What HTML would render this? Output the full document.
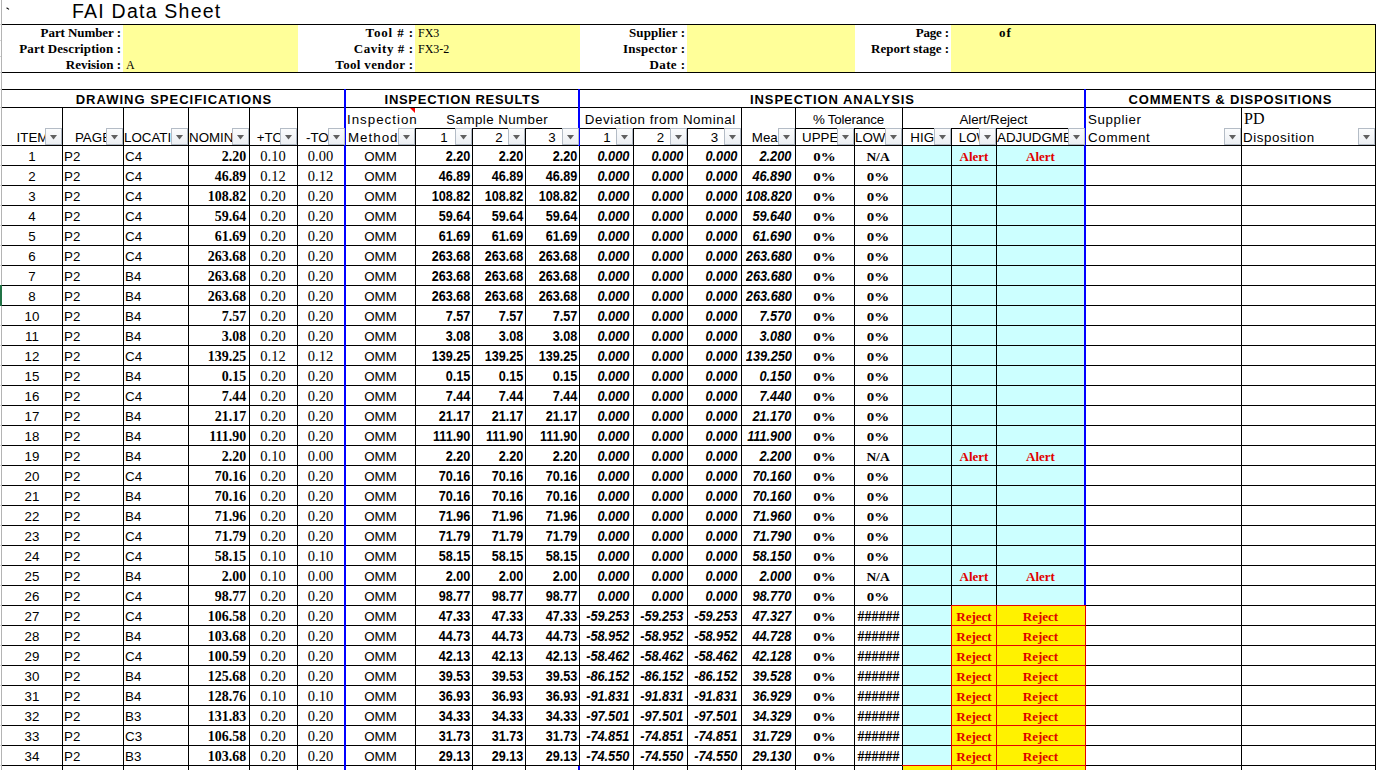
<!DOCTYPE html><html><head><meta charset="utf-8"><style>
*{margin:0;padding:0;box-sizing:border-box}
html,body{width:1378px;height:770px;overflow:hidden;background:#fff;position:relative}
div{position:absolute}
.t{white-space:nowrap;overflow:hidden;color:#000;line-height:normal}
.btn{width:17px;height:17px;border:1px solid #b4bcc6;background:linear-gradient(#fbfcfd,#eceff3)}
.btn svg{position:absolute;left:4px;top:6px}
</style></head><body><div style="left:1px;top:0px;width:1px;height:770px;background:#b4b4b4"></div>
<div style="left:0px;top:24px;width:1px;height:1px;background:#d4d4d4"></div>
<div style="left:0px;top:40px;width:1px;height:1px;background:#d4d4d4"></div>
<div style="left:0px;top:56px;width:1px;height:1px;background:#d4d4d4"></div>
<div style="left:0px;top:72px;width:1px;height:1px;background:#d4d4d4"></div>
<div style="left:0px;top:89px;width:1px;height:1px;background:#d4d4d4"></div>
<div style="left:0px;top:107px;width:1px;height:1px;background:#d4d4d4"></div>
<div style="left:0px;top:145px;width:1px;height:1px;background:#d4d4d4"></div>
<div style="left:0px;top:165px;width:1px;height:1px;background:#d4d4d4"></div>
<div style="left:0px;top:185px;width:1px;height:1px;background:#d4d4d4"></div>
<div style="left:0px;top:205px;width:1px;height:1px;background:#d4d4d4"></div>
<div style="left:0px;top:225px;width:1px;height:1px;background:#d4d4d4"></div>
<div style="left:0px;top:245px;width:1px;height:1px;background:#d4d4d4"></div>
<div style="left:0px;top:265px;width:1px;height:1px;background:#d4d4d4"></div>
<div style="left:0px;top:285px;width:1px;height:1px;background:#d4d4d4"></div>
<div style="left:0px;top:305px;width:1px;height:1px;background:#d4d4d4"></div>
<div style="left:0px;top:325px;width:1px;height:1px;background:#d4d4d4"></div>
<div style="left:0px;top:345px;width:1px;height:1px;background:#d4d4d4"></div>
<div style="left:0px;top:365px;width:1px;height:1px;background:#d4d4d4"></div>
<div style="left:0px;top:385px;width:1px;height:1px;background:#d4d4d4"></div>
<div style="left:0px;top:405px;width:1px;height:1px;background:#d4d4d4"></div>
<div style="left:0px;top:425px;width:1px;height:1px;background:#d4d4d4"></div>
<div style="left:0px;top:445px;width:1px;height:1px;background:#d4d4d4"></div>
<div style="left:0px;top:465px;width:1px;height:1px;background:#d4d4d4"></div>
<div style="left:0px;top:485px;width:1px;height:1px;background:#d4d4d4"></div>
<div style="left:0px;top:505px;width:1px;height:1px;background:#d4d4d4"></div>
<div style="left:0px;top:525px;width:1px;height:1px;background:#d4d4d4"></div>
<div style="left:0px;top:545px;width:1px;height:1px;background:#d4d4d4"></div>
<div style="left:0px;top:565px;width:1px;height:1px;background:#d4d4d4"></div>
<div style="left:0px;top:585px;width:1px;height:1px;background:#d4d4d4"></div>
<div style="left:0px;top:605px;width:1px;height:1px;background:#d4d4d4"></div>
<div style="left:0px;top:625px;width:1px;height:1px;background:#d4d4d4"></div>
<div style="left:0px;top:645px;width:1px;height:1px;background:#d4d4d4"></div>
<div style="left:0px;top:665px;width:1px;height:1px;background:#d4d4d4"></div>
<div style="left:0px;top:685px;width:1px;height:1px;background:#d4d4d4"></div>
<div style="left:0px;top:705px;width:1px;height:1px;background:#d4d4d4"></div>
<div style="left:0px;top:725px;width:1px;height:1px;background:#d4d4d4"></div>
<div style="left:0px;top:745px;width:1px;height:1px;background:#d4d4d4"></div>
<div style="left:0px;top:765px;width:1px;height:1px;background:#d4d4d4"></div>
<div style="left:0px;top:285px;width:2px;height:21px;background:#217346"></div>
<div style="left:6px;top:8px;width:3px;height:2px;border-top:1px solid #000;transform:rotate(35deg)"></div>
<div style="left:123px;top:25px;width:175px;height:47px;background:#ffff99"></div>
<div style="left:415px;top:25px;width:165px;height:47px;background:#ffff99"></div>
<div style="left:687px;top:25px;width:168px;height:47px;background:#ffff99"></div>
<div style="left:951px;top:25px;width:424px;height:47px;background:#ffff99"></div>
<div style="left:2px;top:24px;width:1374px;height:1px;background:#000"></div>
<div style="left:2px;top:72px;width:1374px;height:1px;background:#000"></div>
<div style="left:1375px;top:24px;width:1px;height:746px;background:#000"></div>
<div style="left:2px;top:89px;width:1374px;height:1px;background:#000"></div>
<div style="left:2px;top:107px;width:1374px;height:1px;background:#000"></div>
<div style="left:415px;top:128px;width:326px;height:1px;background:#000"></div>
<div style="left:795px;top:128px;width:290px;height:1px;background:#000"></div>
<div style="left:2px;top:145px;width:1374px;height:1px;background:#000"></div>
<div style="left:62px;top:107px;width:1px;height:38px;background:#000"></div>
<div style="left:123px;top:107px;width:1px;height:38px;background:#000"></div>
<div style="left:188px;top:107px;width:1px;height:38px;background:#000"></div>
<div style="left:249px;top:107px;width:1px;height:38px;background:#000"></div>
<div style="left:297px;top:107px;width:1px;height:38px;background:#000"></div>
<div style="left:741px;top:107px;width:1px;height:38px;background:#000"></div>
<div style="left:795px;top:107px;width:1px;height:38px;background:#000"></div>
<div style="left:902px;top:107px;width:1px;height:38px;background:#000"></div>
<div style="left:1241px;top:107px;width:1px;height:38px;background:#000"></div>
<div style="left:415px;top:128px;width:1px;height:17px;background:#000"></div>
<div style="left:472px;top:128px;width:1px;height:17px;background:#000"></div>
<div style="left:525px;top:128px;width:1px;height:17px;background:#000"></div>
<div style="left:633px;top:128px;width:1px;height:17px;background:#000"></div>
<div style="left:687px;top:128px;width:1px;height:17px;background:#000"></div>
<div style="left:854px;top:128px;width:1px;height:17px;background:#000"></div>
<div style="left:951px;top:128px;width:1px;height:17px;background:#000"></div>
<div style="left:996px;top:128px;width:1px;height:17px;background:#000"></div>
<div style="left:903px;top:146px;width:181px;height:624px;background:#ccffff"></div>
<div style="left:2px;top:145px;width:1374px;height:1px;background:#000"></div>
<div style="left:2px;top:165px;width:1374px;height:1px;background:#000"></div>
<div style="left:2px;top:185px;width:1374px;height:1px;background:#000"></div>
<div style="left:2px;top:205px;width:1374px;height:1px;background:#000"></div>
<div style="left:2px;top:225px;width:1374px;height:1px;background:#000"></div>
<div style="left:2px;top:245px;width:1374px;height:1px;background:#000"></div>
<div style="left:2px;top:265px;width:1374px;height:1px;background:#000"></div>
<div style="left:2px;top:285px;width:1374px;height:1px;background:#000"></div>
<div style="left:2px;top:305px;width:1374px;height:1px;background:#000"></div>
<div style="left:2px;top:325px;width:1374px;height:1px;background:#000"></div>
<div style="left:2px;top:345px;width:1374px;height:1px;background:#000"></div>
<div style="left:2px;top:365px;width:1374px;height:1px;background:#000"></div>
<div style="left:2px;top:385px;width:1374px;height:1px;background:#000"></div>
<div style="left:2px;top:405px;width:1374px;height:1px;background:#000"></div>
<div style="left:2px;top:425px;width:1374px;height:1px;background:#000"></div>
<div style="left:2px;top:445px;width:1374px;height:1px;background:#000"></div>
<div style="left:2px;top:465px;width:1374px;height:1px;background:#000"></div>
<div style="left:2px;top:485px;width:1374px;height:1px;background:#000"></div>
<div style="left:2px;top:505px;width:1374px;height:1px;background:#000"></div>
<div style="left:2px;top:525px;width:1374px;height:1px;background:#000"></div>
<div style="left:2px;top:545px;width:1374px;height:1px;background:#000"></div>
<div style="left:2px;top:565px;width:1374px;height:1px;background:#000"></div>
<div style="left:2px;top:585px;width:1374px;height:1px;background:#000"></div>
<div style="left:2px;top:605px;width:1374px;height:1px;background:#000"></div>
<div style="left:2px;top:625px;width:1374px;height:1px;background:#000"></div>
<div style="left:2px;top:645px;width:1374px;height:1px;background:#000"></div>
<div style="left:2px;top:665px;width:1374px;height:1px;background:#000"></div>
<div style="left:2px;top:685px;width:1374px;height:1px;background:#000"></div>
<div style="left:2px;top:705px;width:1374px;height:1px;background:#000"></div>
<div style="left:2px;top:725px;width:1374px;height:1px;background:#000"></div>
<div style="left:2px;top:745px;width:1374px;height:1px;background:#000"></div>
<div style="left:2px;top:765px;width:1374px;height:1px;background:#000"></div>
<div style="left:62px;top:146px;width:1px;height:624px;background:#000"></div>
<div style="left:123px;top:146px;width:1px;height:624px;background:#000"></div>
<div style="left:188px;top:146px;width:1px;height:624px;background:#000"></div>
<div style="left:249px;top:146px;width:1px;height:624px;background:#000"></div>
<div style="left:297px;top:146px;width:1px;height:624px;background:#000"></div>
<div style="left:415px;top:146px;width:1px;height:624px;background:#000"></div>
<div style="left:472px;top:146px;width:1px;height:624px;background:#000"></div>
<div style="left:525px;top:146px;width:1px;height:624px;background:#000"></div>
<div style="left:579px;top:146px;width:1px;height:624px;background:#000"></div>
<div style="left:633px;top:146px;width:1px;height:624px;background:#000"></div>
<div style="left:687px;top:146px;width:1px;height:624px;background:#000"></div>
<div style="left:741px;top:146px;width:1px;height:624px;background:#000"></div>
<div style="left:795px;top:146px;width:1px;height:624px;background:#000"></div>
<div style="left:854px;top:146px;width:1px;height:624px;background:#000"></div>
<div style="left:902px;top:146px;width:1px;height:624px;background:#000"></div>
<div style="left:951px;top:146px;width:1px;height:624px;background:#000"></div>
<div style="left:996px;top:146px;width:1px;height:624px;background:#000"></div>
<div style="left:1241px;top:146px;width:1px;height:624px;background:#000"></div>
<div style="left:344px;top:89px;width:2px;height:681px;background:#0000ff"></div>
<div style="left:578px;top:89px;width:2px;height:57px;background:#0000ff"></div>
<div style="left:578px;top:766px;width:2px;height:4px;background:#0000ff"></div>
<div style="left:1084px;top:89px;width:2px;height:681px;background:#0000ff"></div>
<div style="left:951px;top:605px;width:135px;height:21px;background:#fff200"></div>
<div style="left:951px;top:605px;width:135px;height:1px;background:#e60000"></div>
<div style="left:951px;top:625px;width:135px;height:1px;background:#e60000"></div>
<div style="left:951px;top:605px;width:1px;height:21px;background:#e60000"></div>
<div style="left:996px;top:605px;width:1px;height:21px;background:#e60000"></div>
<div style="left:1085px;top:605px;width:1px;height:21px;background:#e60000"></div>
<div style="left:951px;top:625px;width:135px;height:21px;background:#fff200"></div>
<div style="left:951px;top:625px;width:135px;height:1px;background:#e60000"></div>
<div style="left:951px;top:645px;width:135px;height:1px;background:#e60000"></div>
<div style="left:951px;top:625px;width:1px;height:21px;background:#e60000"></div>
<div style="left:996px;top:625px;width:1px;height:21px;background:#e60000"></div>
<div style="left:1085px;top:625px;width:1px;height:21px;background:#e60000"></div>
<div style="left:951px;top:645px;width:135px;height:21px;background:#fff200"></div>
<div style="left:951px;top:645px;width:135px;height:1px;background:#e60000"></div>
<div style="left:951px;top:665px;width:135px;height:1px;background:#e60000"></div>
<div style="left:951px;top:645px;width:1px;height:21px;background:#e60000"></div>
<div style="left:996px;top:645px;width:1px;height:21px;background:#e60000"></div>
<div style="left:1085px;top:645px;width:1px;height:21px;background:#e60000"></div>
<div style="left:951px;top:665px;width:135px;height:21px;background:#fff200"></div>
<div style="left:951px;top:665px;width:135px;height:1px;background:#e60000"></div>
<div style="left:951px;top:685px;width:135px;height:1px;background:#e60000"></div>
<div style="left:951px;top:665px;width:1px;height:21px;background:#e60000"></div>
<div style="left:996px;top:665px;width:1px;height:21px;background:#e60000"></div>
<div style="left:1085px;top:665px;width:1px;height:21px;background:#e60000"></div>
<div style="left:951px;top:685px;width:135px;height:21px;background:#fff200"></div>
<div style="left:951px;top:685px;width:135px;height:1px;background:#e60000"></div>
<div style="left:951px;top:705px;width:135px;height:1px;background:#e60000"></div>
<div style="left:951px;top:685px;width:1px;height:21px;background:#e60000"></div>
<div style="left:996px;top:685px;width:1px;height:21px;background:#e60000"></div>
<div style="left:1085px;top:685px;width:1px;height:21px;background:#e60000"></div>
<div style="left:951px;top:705px;width:135px;height:21px;background:#fff200"></div>
<div style="left:951px;top:705px;width:135px;height:1px;background:#e60000"></div>
<div style="left:951px;top:725px;width:135px;height:1px;background:#e60000"></div>
<div style="left:951px;top:705px;width:1px;height:21px;background:#e60000"></div>
<div style="left:996px;top:705px;width:1px;height:21px;background:#e60000"></div>
<div style="left:1085px;top:705px;width:1px;height:21px;background:#e60000"></div>
<div style="left:951px;top:725px;width:135px;height:21px;background:#fff200"></div>
<div style="left:951px;top:725px;width:135px;height:1px;background:#e60000"></div>
<div style="left:951px;top:745px;width:135px;height:1px;background:#e60000"></div>
<div style="left:951px;top:725px;width:1px;height:21px;background:#e60000"></div>
<div style="left:996px;top:725px;width:1px;height:21px;background:#e60000"></div>
<div style="left:1085px;top:725px;width:1px;height:21px;background:#e60000"></div>
<div style="left:951px;top:745px;width:135px;height:21px;background:#fff200"></div>
<div style="left:951px;top:745px;width:135px;height:1px;background:#e60000"></div>
<div style="left:951px;top:765px;width:135px;height:1px;background:#e60000"></div>
<div style="left:951px;top:745px;width:1px;height:21px;background:#e60000"></div>
<div style="left:996px;top:745px;width:1px;height:21px;background:#e60000"></div>
<div style="left:1085px;top:745px;width:1px;height:21px;background:#e60000"></div>
<div style="left:902px;top:765px;width:184px;height:5px;background:#fff200"></div>
<div style="left:902px;top:765px;width:184px;height:1px;background:#e60000"></div>
<div style="left:902px;top:766px;width:1px;height:4px;background:#000"></div>
<div style="left:951px;top:765px;width:1px;height:5px;background:#e60000"></div>
<div style="left:996px;top:765px;width:1px;height:5px;background:#e60000"></div>
<div style="left:1085px;top:765px;width:1px;height:5px;background:#e60000"></div>
<div class="t" style="left:72px;top:0px;width:328px;text-align:left;padding-left:0px;font-family:'Liberation Sans',sans-serif;font-size:19.5px;letter-spacing:1.23px;">FAI Data Sheet</div>
<div class="t" style="left:2px;top:25px;width:121px;text-align:right;padding-right:2px;font-family:'Liberation Serif',serif;font-size:13px;font-weight:bold;letter-spacing:-0.08px;padding-right:2.08px;">Part Number :</div>
<div class="t" style="left:2px;top:41px;width:121px;text-align:right;padding-right:2px;font-family:'Liberation Serif',serif;font-size:13px;font-weight:bold;letter-spacing:0.12px;padding-right:1.88px;">Part Description :</div>
<div class="t" style="left:2px;top:57px;width:121px;text-align:right;padding-right:2px;font-family:'Liberation Serif',serif;font-size:13px;font-weight:bold;letter-spacing:0.00px;padding-right:2.00px;">Revision :</div>
<div class="t" style="left:297px;top:25px;width:118px;text-align:right;padding-right:2px;font-family:'Liberation Serif',serif;font-size:13px;font-weight:bold;letter-spacing:0.86px;padding-right:1.14px;">Tool # :</div>
<div class="t" style="left:297px;top:41px;width:118px;text-align:right;padding-right:2px;font-family:'Liberation Serif',serif;font-size:13px;font-weight:bold;letter-spacing:0.56px;padding-right:1.44px;">Cavity # :</div>
<div class="t" style="left:297px;top:57px;width:118px;text-align:right;padding-right:2px;font-family:'Liberation Serif',serif;font-size:13px;font-weight:bold;letter-spacing:0.33px;padding-right:1.67px;">Tool vendor :</div>
<div class="t" style="left:579px;top:25px;width:108px;text-align:right;padding-right:2px;font-family:'Liberation Serif',serif;font-size:13px;font-weight:bold;letter-spacing:0.11px;padding-right:1.89px;">Supplier :</div>
<div class="t" style="left:579px;top:41px;width:108px;text-align:right;padding-right:2px;font-family:'Liberation Serif',serif;font-size:13px;font-weight:bold;letter-spacing:0.20px;padding-right:1.80px;">Inspector :</div>
<div class="t" style="left:579px;top:57px;width:108px;text-align:right;padding-right:2px;font-family:'Liberation Serif',serif;font-size:13px;font-weight:bold;letter-spacing:0.40px;padding-right:1.60px;">Date :</div>
<div class="t" style="left:854px;top:25px;width:97px;text-align:right;padding-right:2px;font-family:'Liberation Serif',serif;font-size:13px;font-weight:bold;letter-spacing:-0.20px;padding-right:2.20px;">Page :</div>
<div class="t" style="left:854px;top:41px;width:97px;text-align:right;padding-right:2px;font-family:'Liberation Serif',serif;font-size:13px;font-weight:bold;letter-spacing:0.00px;padding-right:2.00px;">Report stage :</div>
<div class="t" style="left:123px;top:58px;width:174px;text-align:left;padding-left:3px;font-family:'Liberation Serif',serif;font-size:12px;">A</div>
<div class="t" style="left:415px;top:26px;width:164px;text-align:left;padding-left:3px;font-family:'Liberation Serif',serif;font-size:12px;">FX3</div>
<div class="t" style="left:415px;top:42px;width:164px;text-align:left;padding-left:3px;font-family:'Liberation Serif',serif;font-size:12px;">FX3-2</div>
<div class="t" style="left:997px;top:25px;width:103px;text-align:left;padding-left:2px;font-family:'Liberation Serif',serif;font-size:13px;font-weight:bold;letter-spacing:1.00px;">of</div>
<div class="t" style="left:2px;top:92px;width:343px;text-align:center;font-family:'Liberation Sans',sans-serif;font-size:13px;font-weight:bold;letter-spacing:1.00px;text-indent:1.00px;">DRAWING SPECIFICATIONS</div>
<div class="t" style="left:345px;top:92px;width:234px;text-align:center;font-family:'Liberation Sans',sans-serif;font-size:13px;font-weight:bold;letter-spacing:0.71px;text-indent:0.71px;">INSPECTION RESULTS</div>
<div class="t" style="left:579px;top:92px;width:506px;text-align:center;font-family:'Liberation Sans',sans-serif;font-size:13px;font-weight:bold;letter-spacing:0.94px;text-indent:0.94px;">INSPECTION ANALYSIS</div>
<div class="t" style="left:1085px;top:92px;width:290px;text-align:center;font-family:'Liberation Sans',sans-serif;font-size:13px;font-weight:bold;letter-spacing:0.82px;text-indent:0.82px;">COMMENTS &amp; DISPOSITIONS</div>
<div class="t" style="left:345px;top:112px;width:155px;text-align:left;padding-left:2px;font-family:'Liberation Sans',sans-serif;font-size:13.33px;letter-spacing:1.00px;">Inspection</div>
<div class="t" style="left:415px;top:112px;width:164px;text-align:center;font-family:'Liberation Sans',sans-serif;font-size:13.33px;letter-spacing:0.42px;text-indent:0.42px;">Sample Number</div>
<div class="t" style="left:579px;top:112px;width:162px;text-align:center;font-family:'Liberation Sans',sans-serif;font-size:13.33px;letter-spacing:0.57px;text-indent:0.57px;">Deviation from Nominal</div>
<div class="t" style="left:795px;top:112px;width:107px;text-align:center;font-family:'Liberation Sans',sans-serif;font-size:13.33px;letter-spacing:-0.20px;text-indent:-0.20px;">% Tolerance</div>
<div class="t" style="left:902px;top:112px;width:183px;text-align:center;font-family:'Liberation Sans',sans-serif;font-size:13.33px;letter-spacing:-0.09px;text-indent:-0.09px;">Alert/Reject</div>
<div class="t" style="left:1085px;top:112px;width:156px;text-align:left;padding-left:3px;font-family:'Liberation Sans',sans-serif;font-size:13.33px;letter-spacing:0.57px;">Supplier</div>
<div class="t" style="left:1241px;top:110px;width:134px;text-align:left;padding-left:3px;font-family:'Liberation Serif',serif;font-size:16px;">PD</div>
<div class="t" style="left:3px;top:130px;width:59px;text-align:center;font-family:'Liberation Sans',sans-serif;font-size:13.33px;">ITEM</div>
<div class="t" style="left:63px;top:130px;width:60px;text-align:center;font-family:'Liberation Sans',sans-serif;font-size:13.33px;">PAGE</div>
<div class="t" style="left:124px;top:130px;width:64px;text-align:center;font-family:'Liberation Sans',sans-serif;font-size:13.33px;">LOCATION</div>
<div class="t" style="left:189px;top:130px;width:60px;text-align:center;font-family:'Liberation Sans',sans-serif;font-size:13.33px;">NOMINAL</div>
<div class="t" style="left:250px;top:130px;width:47px;text-align:center;font-family:'Liberation Sans',sans-serif;font-size:13.33px;">+TOL</div>
<div class="t" style="left:298px;top:130px;width:46px;text-align:center;font-family:'Liberation Sans',sans-serif;font-size:13.33px;">-TOL</div>
<div class="t" style="left:347px;top:130px;width:68px;text-align:left;padding-left:1px;font-family:'Liberation Sans',sans-serif;font-size:13.33px;letter-spacing:1.00px;">Method</div>
<div class="t" style="left:416px;top:130px;width:56px;text-align:center;font-family:'Liberation Sans',sans-serif;font-size:13.33px;">1</div>
<div class="t" style="left:473px;top:130px;width:52px;text-align:center;font-family:'Liberation Sans',sans-serif;font-size:13.33px;">2</div>
<div class="t" style="left:526px;top:130px;width:52px;text-align:center;font-family:'Liberation Sans',sans-serif;font-size:13.33px;">3</div>
<div class="t" style="left:581px;top:130px;width:52px;text-align:center;font-family:'Liberation Sans',sans-serif;font-size:13.33px;">1</div>
<div class="t" style="left:634px;top:130px;width:53px;text-align:center;font-family:'Liberation Sans',sans-serif;font-size:13.33px;">2</div>
<div class="t" style="left:688px;top:130px;width:53px;text-align:center;font-family:'Liberation Sans',sans-serif;font-size:13.33px;">3</div>
<div class="t" style="left:742px;top:130px;width:53px;text-align:center;font-family:'Liberation Sans',sans-serif;font-size:13.33px;">Mean</div>
<div class="t" style="left:796px;top:130px;width:58px;text-align:center;font-family:'Liberation Sans',sans-serif;font-size:13.33px;">UPPER</div>
<div class="t" style="left:855px;top:130px;width:47px;text-align:center;font-family:'Liberation Sans',sans-serif;font-size:13.33px;">LOWER</div>
<div class="t" style="left:903px;top:130px;width:48px;text-align:center;font-family:'Liberation Sans',sans-serif;font-size:13.33px;">HIGH</div>
<div class="t" style="left:952px;top:130px;width:44px;text-align:center;font-family:'Liberation Sans',sans-serif;font-size:13.33px;">LOW</div>
<div class="t" style="left:997px;top:130px;width:87px;text-align:center;font-family:'Liberation Sans',sans-serif;font-size:13.33px;">ADJUDGMENT</div>
<div class="t" style="left:1087px;top:130px;width:154px;text-align:left;padding-left:1px;font-family:'Liberation Sans',sans-serif;font-size:13.33px;letter-spacing:0.67px;">Comment</div>
<div class="t" style="left:1242px;top:130px;width:133px;text-align:left;padding-left:1px;font-family:'Liberation Sans',sans-serif;font-size:13.33px;letter-spacing:0.60px;">Disposition</div>
<div class="t" style="left:2px;top:149px;width:60px;text-align:center;font-family:'Liberation Sans',sans-serif;font-size:13.33px;">1</div>
<div class="t" style="left:62px;top:149px;width:61px;text-align:left;padding-left:2px;font-family:'Liberation Sans',sans-serif;font-size:13.33px;">P2</div>
<div class="t" style="left:123px;top:149px;width:65px;text-align:left;padding-left:2px;font-family:'Liberation Sans',sans-serif;font-size:13.33px;">C4</div>
<div class="t" style="left:188px;top:148px;width:61px;text-align:right;padding-right:3px;font-family:'Liberation Serif',serif;font-size:15px;font-weight:bold;transform:scaleX(0.93);transform-origin:right center;">2.20</div>
<div class="t" style="left:249px;top:148px;width:48px;text-align:center;font-family:'Liberation Serif',serif;font-size:14.5px;">0.10</div>
<div class="t" style="left:297px;top:148px;width:47px;text-align:center;font-family:'Liberation Serif',serif;font-size:14.5px;">0.00</div>
<div class="t" style="left:346px;top:149px;width:69px;text-align:center;font-family:'Liberation Sans',sans-serif;font-size:13.33px;">OMM</div>
<div class="t" style="left:416px;top:148px;width:56px;text-align:right;padding-right:2px;font-family:'Liberation Sans',sans-serif;font-size:14px;font-weight:bold;transform:scaleX(0.9);transform-origin:right center;">2.20</div>
<div class="t" style="left:473px;top:148px;width:52px;text-align:right;padding-right:2px;font-family:'Liberation Sans',sans-serif;font-size:14px;font-weight:bold;transform:scaleX(0.9);transform-origin:right center;">2.20</div>
<div class="t" style="left:526px;top:148px;width:53px;text-align:right;padding-right:2px;font-family:'Liberation Sans',sans-serif;font-size:14px;font-weight:bold;transform:scaleX(0.9);transform-origin:right center;">2.20</div>
<div class="t" style="left:580px;top:148px;width:53px;text-align:right;padding-right:4px;font-family:'Liberation Sans',sans-serif;font-size:14px;font-weight:bold;font-style:italic;transform:scaleX(0.91);transform-origin:right center;">0.000</div>
<div class="t" style="left:634px;top:148px;width:53px;text-align:right;padding-right:4px;font-family:'Liberation Sans',sans-serif;font-size:14px;font-weight:bold;font-style:italic;transform:scaleX(0.91);transform-origin:right center;">0.000</div>
<div class="t" style="left:688px;top:148px;width:53px;text-align:right;padding-right:4px;font-family:'Liberation Sans',sans-serif;font-size:14px;font-weight:bold;font-style:italic;transform:scaleX(0.91);transform-origin:right center;">0.000</div>
<div class="t" style="left:741px;top:148px;width:54px;text-align:right;padding-right:4px;font-family:'Liberation Sans',sans-serif;font-size:14px;font-weight:bold;font-style:italic;transform:scaleX(0.91);transform-origin:right center;">2.200</div>
<div class="t" style="left:795px;top:149px;width:59px;text-align:center;font-family:'Liberation Serif',serif;font-size:13px;font-weight:bold;transform:scaleX(1.15);transform-origin:center center;">0%</div>
<div class="t" style="left:854px;top:149px;width:48px;text-align:center;font-family:'Liberation Serif',serif;font-size:13.5px;font-weight:bold;">N/A</div>
<div class="t" style="left:952px;top:149px;width:44px;text-align:center;font-family:'Liberation Serif',serif;font-size:13px;font-weight:bold;color:#e00000;">Alert</div>
<div class="t" style="left:997px;top:149px;width:87px;text-align:center;font-family:'Liberation Serif',serif;font-size:13px;font-weight:bold;color:#e00000;">Alert</div>
<div class="t" style="left:2px;top:169px;width:60px;text-align:center;font-family:'Liberation Sans',sans-serif;font-size:13.33px;">2</div>
<div class="t" style="left:62px;top:169px;width:61px;text-align:left;padding-left:2px;font-family:'Liberation Sans',sans-serif;font-size:13.33px;">P2</div>
<div class="t" style="left:123px;top:169px;width:65px;text-align:left;padding-left:2px;font-family:'Liberation Sans',sans-serif;font-size:13.33px;">C4</div>
<div class="t" style="left:188px;top:168px;width:61px;text-align:right;padding-right:3px;font-family:'Liberation Serif',serif;font-size:15px;font-weight:bold;transform:scaleX(0.93);transform-origin:right center;">46.89</div>
<div class="t" style="left:249px;top:168px;width:48px;text-align:center;font-family:'Liberation Serif',serif;font-size:14.5px;">0.12</div>
<div class="t" style="left:297px;top:168px;width:47px;text-align:center;font-family:'Liberation Serif',serif;font-size:14.5px;">0.12</div>
<div class="t" style="left:346px;top:169px;width:69px;text-align:center;font-family:'Liberation Sans',sans-serif;font-size:13.33px;">OMM</div>
<div class="t" style="left:416px;top:168px;width:56px;text-align:right;padding-right:2px;font-family:'Liberation Sans',sans-serif;font-size:14px;font-weight:bold;transform:scaleX(0.9);transform-origin:right center;">46.89</div>
<div class="t" style="left:473px;top:168px;width:52px;text-align:right;padding-right:2px;font-family:'Liberation Sans',sans-serif;font-size:14px;font-weight:bold;transform:scaleX(0.9);transform-origin:right center;">46.89</div>
<div class="t" style="left:526px;top:168px;width:53px;text-align:right;padding-right:2px;font-family:'Liberation Sans',sans-serif;font-size:14px;font-weight:bold;transform:scaleX(0.9);transform-origin:right center;">46.89</div>
<div class="t" style="left:580px;top:168px;width:53px;text-align:right;padding-right:4px;font-family:'Liberation Sans',sans-serif;font-size:14px;font-weight:bold;font-style:italic;transform:scaleX(0.91);transform-origin:right center;">0.000</div>
<div class="t" style="left:634px;top:168px;width:53px;text-align:right;padding-right:4px;font-family:'Liberation Sans',sans-serif;font-size:14px;font-weight:bold;font-style:italic;transform:scaleX(0.91);transform-origin:right center;">0.000</div>
<div class="t" style="left:688px;top:168px;width:53px;text-align:right;padding-right:4px;font-family:'Liberation Sans',sans-serif;font-size:14px;font-weight:bold;font-style:italic;transform:scaleX(0.91);transform-origin:right center;">0.000</div>
<div class="t" style="left:741px;top:168px;width:54px;text-align:right;padding-right:4px;font-family:'Liberation Sans',sans-serif;font-size:14px;font-weight:bold;font-style:italic;transform:scaleX(0.91);transform-origin:right center;">46.890</div>
<div class="t" style="left:795px;top:169px;width:59px;text-align:center;font-family:'Liberation Serif',serif;font-size:13px;font-weight:bold;transform:scaleX(1.15);transform-origin:center center;">0%</div>
<div class="t" style="left:854px;top:169px;width:48px;text-align:center;font-family:'Liberation Serif',serif;font-size:13px;font-weight:bold;transform:scaleX(1.15);transform-origin:center center;">0%</div>
<div class="t" style="left:2px;top:189px;width:60px;text-align:center;font-family:'Liberation Sans',sans-serif;font-size:13.33px;">3</div>
<div class="t" style="left:62px;top:189px;width:61px;text-align:left;padding-left:2px;font-family:'Liberation Sans',sans-serif;font-size:13.33px;">P2</div>
<div class="t" style="left:123px;top:189px;width:65px;text-align:left;padding-left:2px;font-family:'Liberation Sans',sans-serif;font-size:13.33px;">C4</div>
<div class="t" style="left:188px;top:188px;width:61px;text-align:right;padding-right:3px;font-family:'Liberation Serif',serif;font-size:15px;font-weight:bold;transform:scaleX(0.93);transform-origin:right center;">108.82</div>
<div class="t" style="left:249px;top:188px;width:48px;text-align:center;font-family:'Liberation Serif',serif;font-size:14.5px;">0.20</div>
<div class="t" style="left:297px;top:188px;width:47px;text-align:center;font-family:'Liberation Serif',serif;font-size:14.5px;">0.20</div>
<div class="t" style="left:346px;top:189px;width:69px;text-align:center;font-family:'Liberation Sans',sans-serif;font-size:13.33px;">OMM</div>
<div class="t" style="left:416px;top:188px;width:56px;text-align:right;padding-right:2px;font-family:'Liberation Sans',sans-serif;font-size:14px;font-weight:bold;transform:scaleX(0.9);transform-origin:right center;">108.82</div>
<div class="t" style="left:473px;top:188px;width:52px;text-align:right;padding-right:2px;font-family:'Liberation Sans',sans-serif;font-size:14px;font-weight:bold;transform:scaleX(0.9);transform-origin:right center;">108.82</div>
<div class="t" style="left:526px;top:188px;width:53px;text-align:right;padding-right:2px;font-family:'Liberation Sans',sans-serif;font-size:14px;font-weight:bold;transform:scaleX(0.9);transform-origin:right center;">108.82</div>
<div class="t" style="left:580px;top:188px;width:53px;text-align:right;padding-right:4px;font-family:'Liberation Sans',sans-serif;font-size:14px;font-weight:bold;font-style:italic;transform:scaleX(0.91);transform-origin:right center;">0.000</div>
<div class="t" style="left:634px;top:188px;width:53px;text-align:right;padding-right:4px;font-family:'Liberation Sans',sans-serif;font-size:14px;font-weight:bold;font-style:italic;transform:scaleX(0.91);transform-origin:right center;">0.000</div>
<div class="t" style="left:688px;top:188px;width:53px;text-align:right;padding-right:4px;font-family:'Liberation Sans',sans-serif;font-size:14px;font-weight:bold;font-style:italic;transform:scaleX(0.91);transform-origin:right center;">0.000</div>
<div class="t" style="left:741px;top:188px;width:54px;text-align:right;padding-right:4px;font-family:'Liberation Sans',sans-serif;font-size:14px;font-weight:bold;font-style:italic;transform:scaleX(0.91);transform-origin:right center;">108.820</div>
<div class="t" style="left:795px;top:189px;width:59px;text-align:center;font-family:'Liberation Serif',serif;font-size:13px;font-weight:bold;transform:scaleX(1.15);transform-origin:center center;">0%</div>
<div class="t" style="left:854px;top:189px;width:48px;text-align:center;font-family:'Liberation Serif',serif;font-size:13px;font-weight:bold;transform:scaleX(1.15);transform-origin:center center;">0%</div>
<div class="t" style="left:2px;top:209px;width:60px;text-align:center;font-family:'Liberation Sans',sans-serif;font-size:13.33px;">4</div>
<div class="t" style="left:62px;top:209px;width:61px;text-align:left;padding-left:2px;font-family:'Liberation Sans',sans-serif;font-size:13.33px;">P2</div>
<div class="t" style="left:123px;top:209px;width:65px;text-align:left;padding-left:2px;font-family:'Liberation Sans',sans-serif;font-size:13.33px;">C4</div>
<div class="t" style="left:188px;top:208px;width:61px;text-align:right;padding-right:3px;font-family:'Liberation Serif',serif;font-size:15px;font-weight:bold;transform:scaleX(0.93);transform-origin:right center;">59.64</div>
<div class="t" style="left:249px;top:208px;width:48px;text-align:center;font-family:'Liberation Serif',serif;font-size:14.5px;">0.20</div>
<div class="t" style="left:297px;top:208px;width:47px;text-align:center;font-family:'Liberation Serif',serif;font-size:14.5px;">0.20</div>
<div class="t" style="left:346px;top:209px;width:69px;text-align:center;font-family:'Liberation Sans',sans-serif;font-size:13.33px;">OMM</div>
<div class="t" style="left:416px;top:208px;width:56px;text-align:right;padding-right:2px;font-family:'Liberation Sans',sans-serif;font-size:14px;font-weight:bold;transform:scaleX(0.9);transform-origin:right center;">59.64</div>
<div class="t" style="left:473px;top:208px;width:52px;text-align:right;padding-right:2px;font-family:'Liberation Sans',sans-serif;font-size:14px;font-weight:bold;transform:scaleX(0.9);transform-origin:right center;">59.64</div>
<div class="t" style="left:526px;top:208px;width:53px;text-align:right;padding-right:2px;font-family:'Liberation Sans',sans-serif;font-size:14px;font-weight:bold;transform:scaleX(0.9);transform-origin:right center;">59.64</div>
<div class="t" style="left:580px;top:208px;width:53px;text-align:right;padding-right:4px;font-family:'Liberation Sans',sans-serif;font-size:14px;font-weight:bold;font-style:italic;transform:scaleX(0.91);transform-origin:right center;">0.000</div>
<div class="t" style="left:634px;top:208px;width:53px;text-align:right;padding-right:4px;font-family:'Liberation Sans',sans-serif;font-size:14px;font-weight:bold;font-style:italic;transform:scaleX(0.91);transform-origin:right center;">0.000</div>
<div class="t" style="left:688px;top:208px;width:53px;text-align:right;padding-right:4px;font-family:'Liberation Sans',sans-serif;font-size:14px;font-weight:bold;font-style:italic;transform:scaleX(0.91);transform-origin:right center;">0.000</div>
<div class="t" style="left:741px;top:208px;width:54px;text-align:right;padding-right:4px;font-family:'Liberation Sans',sans-serif;font-size:14px;font-weight:bold;font-style:italic;transform:scaleX(0.91);transform-origin:right center;">59.640</div>
<div class="t" style="left:795px;top:209px;width:59px;text-align:center;font-family:'Liberation Serif',serif;font-size:13px;font-weight:bold;transform:scaleX(1.15);transform-origin:center center;">0%</div>
<div class="t" style="left:854px;top:209px;width:48px;text-align:center;font-family:'Liberation Serif',serif;font-size:13px;font-weight:bold;transform:scaleX(1.15);transform-origin:center center;">0%</div>
<div class="t" style="left:2px;top:229px;width:60px;text-align:center;font-family:'Liberation Sans',sans-serif;font-size:13.33px;">5</div>
<div class="t" style="left:62px;top:229px;width:61px;text-align:left;padding-left:2px;font-family:'Liberation Sans',sans-serif;font-size:13.33px;">P2</div>
<div class="t" style="left:123px;top:229px;width:65px;text-align:left;padding-left:2px;font-family:'Liberation Sans',sans-serif;font-size:13.33px;">C4</div>
<div class="t" style="left:188px;top:228px;width:61px;text-align:right;padding-right:3px;font-family:'Liberation Serif',serif;font-size:15px;font-weight:bold;transform:scaleX(0.93);transform-origin:right center;">61.69</div>
<div class="t" style="left:249px;top:228px;width:48px;text-align:center;font-family:'Liberation Serif',serif;font-size:14.5px;">0.20</div>
<div class="t" style="left:297px;top:228px;width:47px;text-align:center;font-family:'Liberation Serif',serif;font-size:14.5px;">0.20</div>
<div class="t" style="left:346px;top:229px;width:69px;text-align:center;font-family:'Liberation Sans',sans-serif;font-size:13.33px;">OMM</div>
<div class="t" style="left:416px;top:228px;width:56px;text-align:right;padding-right:2px;font-family:'Liberation Sans',sans-serif;font-size:14px;font-weight:bold;transform:scaleX(0.9);transform-origin:right center;">61.69</div>
<div class="t" style="left:473px;top:228px;width:52px;text-align:right;padding-right:2px;font-family:'Liberation Sans',sans-serif;font-size:14px;font-weight:bold;transform:scaleX(0.9);transform-origin:right center;">61.69</div>
<div class="t" style="left:526px;top:228px;width:53px;text-align:right;padding-right:2px;font-family:'Liberation Sans',sans-serif;font-size:14px;font-weight:bold;transform:scaleX(0.9);transform-origin:right center;">61.69</div>
<div class="t" style="left:580px;top:228px;width:53px;text-align:right;padding-right:4px;font-family:'Liberation Sans',sans-serif;font-size:14px;font-weight:bold;font-style:italic;transform:scaleX(0.91);transform-origin:right center;">0.000</div>
<div class="t" style="left:634px;top:228px;width:53px;text-align:right;padding-right:4px;font-family:'Liberation Sans',sans-serif;font-size:14px;font-weight:bold;font-style:italic;transform:scaleX(0.91);transform-origin:right center;">0.000</div>
<div class="t" style="left:688px;top:228px;width:53px;text-align:right;padding-right:4px;font-family:'Liberation Sans',sans-serif;font-size:14px;font-weight:bold;font-style:italic;transform:scaleX(0.91);transform-origin:right center;">0.000</div>
<div class="t" style="left:741px;top:228px;width:54px;text-align:right;padding-right:4px;font-family:'Liberation Sans',sans-serif;font-size:14px;font-weight:bold;font-style:italic;transform:scaleX(0.91);transform-origin:right center;">61.690</div>
<div class="t" style="left:795px;top:229px;width:59px;text-align:center;font-family:'Liberation Serif',serif;font-size:13px;font-weight:bold;transform:scaleX(1.15);transform-origin:center center;">0%</div>
<div class="t" style="left:854px;top:229px;width:48px;text-align:center;font-family:'Liberation Serif',serif;font-size:13px;font-weight:bold;transform:scaleX(1.15);transform-origin:center center;">0%</div>
<div class="t" style="left:2px;top:249px;width:60px;text-align:center;font-family:'Liberation Sans',sans-serif;font-size:13.33px;">6</div>
<div class="t" style="left:62px;top:249px;width:61px;text-align:left;padding-left:2px;font-family:'Liberation Sans',sans-serif;font-size:13.33px;">P2</div>
<div class="t" style="left:123px;top:249px;width:65px;text-align:left;padding-left:2px;font-family:'Liberation Sans',sans-serif;font-size:13.33px;">C4</div>
<div class="t" style="left:188px;top:248px;width:61px;text-align:right;padding-right:3px;font-family:'Liberation Serif',serif;font-size:15px;font-weight:bold;transform:scaleX(0.93);transform-origin:right center;">263.68</div>
<div class="t" style="left:249px;top:248px;width:48px;text-align:center;font-family:'Liberation Serif',serif;font-size:14.5px;">0.20</div>
<div class="t" style="left:297px;top:248px;width:47px;text-align:center;font-family:'Liberation Serif',serif;font-size:14.5px;">0.20</div>
<div class="t" style="left:346px;top:249px;width:69px;text-align:center;font-family:'Liberation Sans',sans-serif;font-size:13.33px;">OMM</div>
<div class="t" style="left:416px;top:248px;width:56px;text-align:right;padding-right:2px;font-family:'Liberation Sans',sans-serif;font-size:14px;font-weight:bold;transform:scaleX(0.9);transform-origin:right center;">263.68</div>
<div class="t" style="left:473px;top:248px;width:52px;text-align:right;padding-right:2px;font-family:'Liberation Sans',sans-serif;font-size:14px;font-weight:bold;transform:scaleX(0.9);transform-origin:right center;">263.68</div>
<div class="t" style="left:526px;top:248px;width:53px;text-align:right;padding-right:2px;font-family:'Liberation Sans',sans-serif;font-size:14px;font-weight:bold;transform:scaleX(0.9);transform-origin:right center;">263.68</div>
<div class="t" style="left:580px;top:248px;width:53px;text-align:right;padding-right:4px;font-family:'Liberation Sans',sans-serif;font-size:14px;font-weight:bold;font-style:italic;transform:scaleX(0.91);transform-origin:right center;">0.000</div>
<div class="t" style="left:634px;top:248px;width:53px;text-align:right;padding-right:4px;font-family:'Liberation Sans',sans-serif;font-size:14px;font-weight:bold;font-style:italic;transform:scaleX(0.91);transform-origin:right center;">0.000</div>
<div class="t" style="left:688px;top:248px;width:53px;text-align:right;padding-right:4px;font-family:'Liberation Sans',sans-serif;font-size:14px;font-weight:bold;font-style:italic;transform:scaleX(0.91);transform-origin:right center;">0.000</div>
<div class="t" style="left:741px;top:248px;width:54px;text-align:right;padding-right:4px;font-family:'Liberation Sans',sans-serif;font-size:14px;font-weight:bold;font-style:italic;transform:scaleX(0.91);transform-origin:right center;">263.680</div>
<div class="t" style="left:795px;top:249px;width:59px;text-align:center;font-family:'Liberation Serif',serif;font-size:13px;font-weight:bold;transform:scaleX(1.15);transform-origin:center center;">0%</div>
<div class="t" style="left:854px;top:249px;width:48px;text-align:center;font-family:'Liberation Serif',serif;font-size:13px;font-weight:bold;transform:scaleX(1.15);transform-origin:center center;">0%</div>
<div class="t" style="left:2px;top:269px;width:60px;text-align:center;font-family:'Liberation Sans',sans-serif;font-size:13.33px;">7</div>
<div class="t" style="left:62px;top:269px;width:61px;text-align:left;padding-left:2px;font-family:'Liberation Sans',sans-serif;font-size:13.33px;">P2</div>
<div class="t" style="left:123px;top:269px;width:65px;text-align:left;padding-left:2px;font-family:'Liberation Sans',sans-serif;font-size:13.33px;">B4</div>
<div class="t" style="left:188px;top:268px;width:61px;text-align:right;padding-right:3px;font-family:'Liberation Serif',serif;font-size:15px;font-weight:bold;transform:scaleX(0.93);transform-origin:right center;">263.68</div>
<div class="t" style="left:249px;top:268px;width:48px;text-align:center;font-family:'Liberation Serif',serif;font-size:14.5px;">0.20</div>
<div class="t" style="left:297px;top:268px;width:47px;text-align:center;font-family:'Liberation Serif',serif;font-size:14.5px;">0.20</div>
<div class="t" style="left:346px;top:269px;width:69px;text-align:center;font-family:'Liberation Sans',sans-serif;font-size:13.33px;">OMM</div>
<div class="t" style="left:416px;top:268px;width:56px;text-align:right;padding-right:2px;font-family:'Liberation Sans',sans-serif;font-size:14px;font-weight:bold;transform:scaleX(0.9);transform-origin:right center;">263.68</div>
<div class="t" style="left:473px;top:268px;width:52px;text-align:right;padding-right:2px;font-family:'Liberation Sans',sans-serif;font-size:14px;font-weight:bold;transform:scaleX(0.9);transform-origin:right center;">263.68</div>
<div class="t" style="left:526px;top:268px;width:53px;text-align:right;padding-right:2px;font-family:'Liberation Sans',sans-serif;font-size:14px;font-weight:bold;transform:scaleX(0.9);transform-origin:right center;">263.68</div>
<div class="t" style="left:580px;top:268px;width:53px;text-align:right;padding-right:4px;font-family:'Liberation Sans',sans-serif;font-size:14px;font-weight:bold;font-style:italic;transform:scaleX(0.91);transform-origin:right center;">0.000</div>
<div class="t" style="left:634px;top:268px;width:53px;text-align:right;padding-right:4px;font-family:'Liberation Sans',sans-serif;font-size:14px;font-weight:bold;font-style:italic;transform:scaleX(0.91);transform-origin:right center;">0.000</div>
<div class="t" style="left:688px;top:268px;width:53px;text-align:right;padding-right:4px;font-family:'Liberation Sans',sans-serif;font-size:14px;font-weight:bold;font-style:italic;transform:scaleX(0.91);transform-origin:right center;">0.000</div>
<div class="t" style="left:741px;top:268px;width:54px;text-align:right;padding-right:4px;font-family:'Liberation Sans',sans-serif;font-size:14px;font-weight:bold;font-style:italic;transform:scaleX(0.91);transform-origin:right center;">263.680</div>
<div class="t" style="left:795px;top:269px;width:59px;text-align:center;font-family:'Liberation Serif',serif;font-size:13px;font-weight:bold;transform:scaleX(1.15);transform-origin:center center;">0%</div>
<div class="t" style="left:854px;top:269px;width:48px;text-align:center;font-family:'Liberation Serif',serif;font-size:13px;font-weight:bold;transform:scaleX(1.15);transform-origin:center center;">0%</div>
<div class="t" style="left:2px;top:289px;width:60px;text-align:center;font-family:'Liberation Sans',sans-serif;font-size:13.33px;">8</div>
<div class="t" style="left:62px;top:289px;width:61px;text-align:left;padding-left:2px;font-family:'Liberation Sans',sans-serif;font-size:13.33px;">P2</div>
<div class="t" style="left:123px;top:289px;width:65px;text-align:left;padding-left:2px;font-family:'Liberation Sans',sans-serif;font-size:13.33px;">B4</div>
<div class="t" style="left:188px;top:288px;width:61px;text-align:right;padding-right:3px;font-family:'Liberation Serif',serif;font-size:15px;font-weight:bold;transform:scaleX(0.93);transform-origin:right center;">263.68</div>
<div class="t" style="left:249px;top:288px;width:48px;text-align:center;font-family:'Liberation Serif',serif;font-size:14.5px;">0.20</div>
<div class="t" style="left:297px;top:288px;width:47px;text-align:center;font-family:'Liberation Serif',serif;font-size:14.5px;">0.20</div>
<div class="t" style="left:346px;top:289px;width:69px;text-align:center;font-family:'Liberation Sans',sans-serif;font-size:13.33px;">OMM</div>
<div class="t" style="left:416px;top:288px;width:56px;text-align:right;padding-right:2px;font-family:'Liberation Sans',sans-serif;font-size:14px;font-weight:bold;transform:scaleX(0.9);transform-origin:right center;">263.68</div>
<div class="t" style="left:473px;top:288px;width:52px;text-align:right;padding-right:2px;font-family:'Liberation Sans',sans-serif;font-size:14px;font-weight:bold;transform:scaleX(0.9);transform-origin:right center;">263.68</div>
<div class="t" style="left:526px;top:288px;width:53px;text-align:right;padding-right:2px;font-family:'Liberation Sans',sans-serif;font-size:14px;font-weight:bold;transform:scaleX(0.9);transform-origin:right center;">263.68</div>
<div class="t" style="left:580px;top:288px;width:53px;text-align:right;padding-right:4px;font-family:'Liberation Sans',sans-serif;font-size:14px;font-weight:bold;font-style:italic;transform:scaleX(0.91);transform-origin:right center;">0.000</div>
<div class="t" style="left:634px;top:288px;width:53px;text-align:right;padding-right:4px;font-family:'Liberation Sans',sans-serif;font-size:14px;font-weight:bold;font-style:italic;transform:scaleX(0.91);transform-origin:right center;">0.000</div>
<div class="t" style="left:688px;top:288px;width:53px;text-align:right;padding-right:4px;font-family:'Liberation Sans',sans-serif;font-size:14px;font-weight:bold;font-style:italic;transform:scaleX(0.91);transform-origin:right center;">0.000</div>
<div class="t" style="left:741px;top:288px;width:54px;text-align:right;padding-right:4px;font-family:'Liberation Sans',sans-serif;font-size:14px;font-weight:bold;font-style:italic;transform:scaleX(0.91);transform-origin:right center;">263.680</div>
<div class="t" style="left:795px;top:289px;width:59px;text-align:center;font-family:'Liberation Serif',serif;font-size:13px;font-weight:bold;transform:scaleX(1.15);transform-origin:center center;">0%</div>
<div class="t" style="left:854px;top:289px;width:48px;text-align:center;font-family:'Liberation Serif',serif;font-size:13px;font-weight:bold;transform:scaleX(1.15);transform-origin:center center;">0%</div>
<div class="t" style="left:2px;top:309px;width:60px;text-align:center;font-family:'Liberation Sans',sans-serif;font-size:13.33px;">10</div>
<div class="t" style="left:62px;top:309px;width:61px;text-align:left;padding-left:2px;font-family:'Liberation Sans',sans-serif;font-size:13.33px;">P2</div>
<div class="t" style="left:123px;top:309px;width:65px;text-align:left;padding-left:2px;font-family:'Liberation Sans',sans-serif;font-size:13.33px;">B4</div>
<div class="t" style="left:188px;top:308px;width:61px;text-align:right;padding-right:3px;font-family:'Liberation Serif',serif;font-size:15px;font-weight:bold;transform:scaleX(0.93);transform-origin:right center;">7.57</div>
<div class="t" style="left:249px;top:308px;width:48px;text-align:center;font-family:'Liberation Serif',serif;font-size:14.5px;">0.20</div>
<div class="t" style="left:297px;top:308px;width:47px;text-align:center;font-family:'Liberation Serif',serif;font-size:14.5px;">0.20</div>
<div class="t" style="left:346px;top:309px;width:69px;text-align:center;font-family:'Liberation Sans',sans-serif;font-size:13.33px;">OMM</div>
<div class="t" style="left:416px;top:308px;width:56px;text-align:right;padding-right:2px;font-family:'Liberation Sans',sans-serif;font-size:14px;font-weight:bold;transform:scaleX(0.9);transform-origin:right center;">7.57</div>
<div class="t" style="left:473px;top:308px;width:52px;text-align:right;padding-right:2px;font-family:'Liberation Sans',sans-serif;font-size:14px;font-weight:bold;transform:scaleX(0.9);transform-origin:right center;">7.57</div>
<div class="t" style="left:526px;top:308px;width:53px;text-align:right;padding-right:2px;font-family:'Liberation Sans',sans-serif;font-size:14px;font-weight:bold;transform:scaleX(0.9);transform-origin:right center;">7.57</div>
<div class="t" style="left:580px;top:308px;width:53px;text-align:right;padding-right:4px;font-family:'Liberation Sans',sans-serif;font-size:14px;font-weight:bold;font-style:italic;transform:scaleX(0.91);transform-origin:right center;">0.000</div>
<div class="t" style="left:634px;top:308px;width:53px;text-align:right;padding-right:4px;font-family:'Liberation Sans',sans-serif;font-size:14px;font-weight:bold;font-style:italic;transform:scaleX(0.91);transform-origin:right center;">0.000</div>
<div class="t" style="left:688px;top:308px;width:53px;text-align:right;padding-right:4px;font-family:'Liberation Sans',sans-serif;font-size:14px;font-weight:bold;font-style:italic;transform:scaleX(0.91);transform-origin:right center;">0.000</div>
<div class="t" style="left:741px;top:308px;width:54px;text-align:right;padding-right:4px;font-family:'Liberation Sans',sans-serif;font-size:14px;font-weight:bold;font-style:italic;transform:scaleX(0.91);transform-origin:right center;">7.570</div>
<div class="t" style="left:795px;top:309px;width:59px;text-align:center;font-family:'Liberation Serif',serif;font-size:13px;font-weight:bold;transform:scaleX(1.15);transform-origin:center center;">0%</div>
<div class="t" style="left:854px;top:309px;width:48px;text-align:center;font-family:'Liberation Serif',serif;font-size:13px;font-weight:bold;transform:scaleX(1.15);transform-origin:center center;">0%</div>
<div class="t" style="left:2px;top:329px;width:60px;text-align:center;font-family:'Liberation Sans',sans-serif;font-size:13.33px;">11</div>
<div class="t" style="left:62px;top:329px;width:61px;text-align:left;padding-left:2px;font-family:'Liberation Sans',sans-serif;font-size:13.33px;">P2</div>
<div class="t" style="left:123px;top:329px;width:65px;text-align:left;padding-left:2px;font-family:'Liberation Sans',sans-serif;font-size:13.33px;">B4</div>
<div class="t" style="left:188px;top:328px;width:61px;text-align:right;padding-right:3px;font-family:'Liberation Serif',serif;font-size:15px;font-weight:bold;transform:scaleX(0.93);transform-origin:right center;">3.08</div>
<div class="t" style="left:249px;top:328px;width:48px;text-align:center;font-family:'Liberation Serif',serif;font-size:14.5px;">0.20</div>
<div class="t" style="left:297px;top:328px;width:47px;text-align:center;font-family:'Liberation Serif',serif;font-size:14.5px;">0.20</div>
<div class="t" style="left:346px;top:329px;width:69px;text-align:center;font-family:'Liberation Sans',sans-serif;font-size:13.33px;">OMM</div>
<div class="t" style="left:416px;top:328px;width:56px;text-align:right;padding-right:2px;font-family:'Liberation Sans',sans-serif;font-size:14px;font-weight:bold;transform:scaleX(0.9);transform-origin:right center;">3.08</div>
<div class="t" style="left:473px;top:328px;width:52px;text-align:right;padding-right:2px;font-family:'Liberation Sans',sans-serif;font-size:14px;font-weight:bold;transform:scaleX(0.9);transform-origin:right center;">3.08</div>
<div class="t" style="left:526px;top:328px;width:53px;text-align:right;padding-right:2px;font-family:'Liberation Sans',sans-serif;font-size:14px;font-weight:bold;transform:scaleX(0.9);transform-origin:right center;">3.08</div>
<div class="t" style="left:580px;top:328px;width:53px;text-align:right;padding-right:4px;font-family:'Liberation Sans',sans-serif;font-size:14px;font-weight:bold;font-style:italic;transform:scaleX(0.91);transform-origin:right center;">0.000</div>
<div class="t" style="left:634px;top:328px;width:53px;text-align:right;padding-right:4px;font-family:'Liberation Sans',sans-serif;font-size:14px;font-weight:bold;font-style:italic;transform:scaleX(0.91);transform-origin:right center;">0.000</div>
<div class="t" style="left:688px;top:328px;width:53px;text-align:right;padding-right:4px;font-family:'Liberation Sans',sans-serif;font-size:14px;font-weight:bold;font-style:italic;transform:scaleX(0.91);transform-origin:right center;">0.000</div>
<div class="t" style="left:741px;top:328px;width:54px;text-align:right;padding-right:4px;font-family:'Liberation Sans',sans-serif;font-size:14px;font-weight:bold;font-style:italic;transform:scaleX(0.91);transform-origin:right center;">3.080</div>
<div class="t" style="left:795px;top:329px;width:59px;text-align:center;font-family:'Liberation Serif',serif;font-size:13px;font-weight:bold;transform:scaleX(1.15);transform-origin:center center;">0%</div>
<div class="t" style="left:854px;top:329px;width:48px;text-align:center;font-family:'Liberation Serif',serif;font-size:13px;font-weight:bold;transform:scaleX(1.15);transform-origin:center center;">0%</div>
<div class="t" style="left:2px;top:349px;width:60px;text-align:center;font-family:'Liberation Sans',sans-serif;font-size:13.33px;">12</div>
<div class="t" style="left:62px;top:349px;width:61px;text-align:left;padding-left:2px;font-family:'Liberation Sans',sans-serif;font-size:13.33px;">P2</div>
<div class="t" style="left:123px;top:349px;width:65px;text-align:left;padding-left:2px;font-family:'Liberation Sans',sans-serif;font-size:13.33px;">C4</div>
<div class="t" style="left:188px;top:348px;width:61px;text-align:right;padding-right:3px;font-family:'Liberation Serif',serif;font-size:15px;font-weight:bold;transform:scaleX(0.93);transform-origin:right center;">139.25</div>
<div class="t" style="left:249px;top:348px;width:48px;text-align:center;font-family:'Liberation Serif',serif;font-size:14.5px;">0.12</div>
<div class="t" style="left:297px;top:348px;width:47px;text-align:center;font-family:'Liberation Serif',serif;font-size:14.5px;">0.12</div>
<div class="t" style="left:346px;top:349px;width:69px;text-align:center;font-family:'Liberation Sans',sans-serif;font-size:13.33px;">OMM</div>
<div class="t" style="left:416px;top:348px;width:56px;text-align:right;padding-right:2px;font-family:'Liberation Sans',sans-serif;font-size:14px;font-weight:bold;transform:scaleX(0.9);transform-origin:right center;">139.25</div>
<div class="t" style="left:473px;top:348px;width:52px;text-align:right;padding-right:2px;font-family:'Liberation Sans',sans-serif;font-size:14px;font-weight:bold;transform:scaleX(0.9);transform-origin:right center;">139.25</div>
<div class="t" style="left:526px;top:348px;width:53px;text-align:right;padding-right:2px;font-family:'Liberation Sans',sans-serif;font-size:14px;font-weight:bold;transform:scaleX(0.9);transform-origin:right center;">139.25</div>
<div class="t" style="left:580px;top:348px;width:53px;text-align:right;padding-right:4px;font-family:'Liberation Sans',sans-serif;font-size:14px;font-weight:bold;font-style:italic;transform:scaleX(0.91);transform-origin:right center;">0.000</div>
<div class="t" style="left:634px;top:348px;width:53px;text-align:right;padding-right:4px;font-family:'Liberation Sans',sans-serif;font-size:14px;font-weight:bold;font-style:italic;transform:scaleX(0.91);transform-origin:right center;">0.000</div>
<div class="t" style="left:688px;top:348px;width:53px;text-align:right;padding-right:4px;font-family:'Liberation Sans',sans-serif;font-size:14px;font-weight:bold;font-style:italic;transform:scaleX(0.91);transform-origin:right center;">0.000</div>
<div class="t" style="left:741px;top:348px;width:54px;text-align:right;padding-right:4px;font-family:'Liberation Sans',sans-serif;font-size:14px;font-weight:bold;font-style:italic;transform:scaleX(0.91);transform-origin:right center;">139.250</div>
<div class="t" style="left:795px;top:349px;width:59px;text-align:center;font-family:'Liberation Serif',serif;font-size:13px;font-weight:bold;transform:scaleX(1.15);transform-origin:center center;">0%</div>
<div class="t" style="left:854px;top:349px;width:48px;text-align:center;font-family:'Liberation Serif',serif;font-size:13px;font-weight:bold;transform:scaleX(1.15);transform-origin:center center;">0%</div>
<div class="t" style="left:2px;top:369px;width:60px;text-align:center;font-family:'Liberation Sans',sans-serif;font-size:13.33px;">15</div>
<div class="t" style="left:62px;top:369px;width:61px;text-align:left;padding-left:2px;font-family:'Liberation Sans',sans-serif;font-size:13.33px;">P2</div>
<div class="t" style="left:123px;top:369px;width:65px;text-align:left;padding-left:2px;font-family:'Liberation Sans',sans-serif;font-size:13.33px;">B4</div>
<div class="t" style="left:188px;top:368px;width:61px;text-align:right;padding-right:3px;font-family:'Liberation Serif',serif;font-size:15px;font-weight:bold;transform:scaleX(0.93);transform-origin:right center;">0.15</div>
<div class="t" style="left:249px;top:368px;width:48px;text-align:center;font-family:'Liberation Serif',serif;font-size:14.5px;">0.20</div>
<div class="t" style="left:297px;top:368px;width:47px;text-align:center;font-family:'Liberation Serif',serif;font-size:14.5px;">0.20</div>
<div class="t" style="left:346px;top:369px;width:69px;text-align:center;font-family:'Liberation Sans',sans-serif;font-size:13.33px;">OMM</div>
<div class="t" style="left:416px;top:368px;width:56px;text-align:right;padding-right:2px;font-family:'Liberation Sans',sans-serif;font-size:14px;font-weight:bold;transform:scaleX(0.9);transform-origin:right center;">0.15</div>
<div class="t" style="left:473px;top:368px;width:52px;text-align:right;padding-right:2px;font-family:'Liberation Sans',sans-serif;font-size:14px;font-weight:bold;transform:scaleX(0.9);transform-origin:right center;">0.15</div>
<div class="t" style="left:526px;top:368px;width:53px;text-align:right;padding-right:2px;font-family:'Liberation Sans',sans-serif;font-size:14px;font-weight:bold;transform:scaleX(0.9);transform-origin:right center;">0.15</div>
<div class="t" style="left:580px;top:368px;width:53px;text-align:right;padding-right:4px;font-family:'Liberation Sans',sans-serif;font-size:14px;font-weight:bold;font-style:italic;transform:scaleX(0.91);transform-origin:right center;">0.000</div>
<div class="t" style="left:634px;top:368px;width:53px;text-align:right;padding-right:4px;font-family:'Liberation Sans',sans-serif;font-size:14px;font-weight:bold;font-style:italic;transform:scaleX(0.91);transform-origin:right center;">0.000</div>
<div class="t" style="left:688px;top:368px;width:53px;text-align:right;padding-right:4px;font-family:'Liberation Sans',sans-serif;font-size:14px;font-weight:bold;font-style:italic;transform:scaleX(0.91);transform-origin:right center;">0.000</div>
<div class="t" style="left:741px;top:368px;width:54px;text-align:right;padding-right:4px;font-family:'Liberation Sans',sans-serif;font-size:14px;font-weight:bold;font-style:italic;transform:scaleX(0.91);transform-origin:right center;">0.150</div>
<div class="t" style="left:795px;top:369px;width:59px;text-align:center;font-family:'Liberation Serif',serif;font-size:13px;font-weight:bold;transform:scaleX(1.15);transform-origin:center center;">0%</div>
<div class="t" style="left:854px;top:369px;width:48px;text-align:center;font-family:'Liberation Serif',serif;font-size:13px;font-weight:bold;transform:scaleX(1.15);transform-origin:center center;">0%</div>
<div class="t" style="left:2px;top:389px;width:60px;text-align:center;font-family:'Liberation Sans',sans-serif;font-size:13.33px;">16</div>
<div class="t" style="left:62px;top:389px;width:61px;text-align:left;padding-left:2px;font-family:'Liberation Sans',sans-serif;font-size:13.33px;">P2</div>
<div class="t" style="left:123px;top:389px;width:65px;text-align:left;padding-left:2px;font-family:'Liberation Sans',sans-serif;font-size:13.33px;">C4</div>
<div class="t" style="left:188px;top:388px;width:61px;text-align:right;padding-right:3px;font-family:'Liberation Serif',serif;font-size:15px;font-weight:bold;transform:scaleX(0.93);transform-origin:right center;">7.44</div>
<div class="t" style="left:249px;top:388px;width:48px;text-align:center;font-family:'Liberation Serif',serif;font-size:14.5px;">0.20</div>
<div class="t" style="left:297px;top:388px;width:47px;text-align:center;font-family:'Liberation Serif',serif;font-size:14.5px;">0.20</div>
<div class="t" style="left:346px;top:389px;width:69px;text-align:center;font-family:'Liberation Sans',sans-serif;font-size:13.33px;">OMM</div>
<div class="t" style="left:416px;top:388px;width:56px;text-align:right;padding-right:2px;font-family:'Liberation Sans',sans-serif;font-size:14px;font-weight:bold;transform:scaleX(0.9);transform-origin:right center;">7.44</div>
<div class="t" style="left:473px;top:388px;width:52px;text-align:right;padding-right:2px;font-family:'Liberation Sans',sans-serif;font-size:14px;font-weight:bold;transform:scaleX(0.9);transform-origin:right center;">7.44</div>
<div class="t" style="left:526px;top:388px;width:53px;text-align:right;padding-right:2px;font-family:'Liberation Sans',sans-serif;font-size:14px;font-weight:bold;transform:scaleX(0.9);transform-origin:right center;">7.44</div>
<div class="t" style="left:580px;top:388px;width:53px;text-align:right;padding-right:4px;font-family:'Liberation Sans',sans-serif;font-size:14px;font-weight:bold;font-style:italic;transform:scaleX(0.91);transform-origin:right center;">0.000</div>
<div class="t" style="left:634px;top:388px;width:53px;text-align:right;padding-right:4px;font-family:'Liberation Sans',sans-serif;font-size:14px;font-weight:bold;font-style:italic;transform:scaleX(0.91);transform-origin:right center;">0.000</div>
<div class="t" style="left:688px;top:388px;width:53px;text-align:right;padding-right:4px;font-family:'Liberation Sans',sans-serif;font-size:14px;font-weight:bold;font-style:italic;transform:scaleX(0.91);transform-origin:right center;">0.000</div>
<div class="t" style="left:741px;top:388px;width:54px;text-align:right;padding-right:4px;font-family:'Liberation Sans',sans-serif;font-size:14px;font-weight:bold;font-style:italic;transform:scaleX(0.91);transform-origin:right center;">7.440</div>
<div class="t" style="left:795px;top:389px;width:59px;text-align:center;font-family:'Liberation Serif',serif;font-size:13px;font-weight:bold;transform:scaleX(1.15);transform-origin:center center;">0%</div>
<div class="t" style="left:854px;top:389px;width:48px;text-align:center;font-family:'Liberation Serif',serif;font-size:13px;font-weight:bold;transform:scaleX(1.15);transform-origin:center center;">0%</div>
<div class="t" style="left:2px;top:409px;width:60px;text-align:center;font-family:'Liberation Sans',sans-serif;font-size:13.33px;">17</div>
<div class="t" style="left:62px;top:409px;width:61px;text-align:left;padding-left:2px;font-family:'Liberation Sans',sans-serif;font-size:13.33px;">P2</div>
<div class="t" style="left:123px;top:409px;width:65px;text-align:left;padding-left:2px;font-family:'Liberation Sans',sans-serif;font-size:13.33px;">B4</div>
<div class="t" style="left:188px;top:408px;width:61px;text-align:right;padding-right:3px;font-family:'Liberation Serif',serif;font-size:15px;font-weight:bold;transform:scaleX(0.93);transform-origin:right center;">21.17</div>
<div class="t" style="left:249px;top:408px;width:48px;text-align:center;font-family:'Liberation Serif',serif;font-size:14.5px;">0.20</div>
<div class="t" style="left:297px;top:408px;width:47px;text-align:center;font-family:'Liberation Serif',serif;font-size:14.5px;">0.20</div>
<div class="t" style="left:346px;top:409px;width:69px;text-align:center;font-family:'Liberation Sans',sans-serif;font-size:13.33px;">OMM</div>
<div class="t" style="left:416px;top:408px;width:56px;text-align:right;padding-right:2px;font-family:'Liberation Sans',sans-serif;font-size:14px;font-weight:bold;transform:scaleX(0.9);transform-origin:right center;">21.17</div>
<div class="t" style="left:473px;top:408px;width:52px;text-align:right;padding-right:2px;font-family:'Liberation Sans',sans-serif;font-size:14px;font-weight:bold;transform:scaleX(0.9);transform-origin:right center;">21.17</div>
<div class="t" style="left:526px;top:408px;width:53px;text-align:right;padding-right:2px;font-family:'Liberation Sans',sans-serif;font-size:14px;font-weight:bold;transform:scaleX(0.9);transform-origin:right center;">21.17</div>
<div class="t" style="left:580px;top:408px;width:53px;text-align:right;padding-right:4px;font-family:'Liberation Sans',sans-serif;font-size:14px;font-weight:bold;font-style:italic;transform:scaleX(0.91);transform-origin:right center;">0.000</div>
<div class="t" style="left:634px;top:408px;width:53px;text-align:right;padding-right:4px;font-family:'Liberation Sans',sans-serif;font-size:14px;font-weight:bold;font-style:italic;transform:scaleX(0.91);transform-origin:right center;">0.000</div>
<div class="t" style="left:688px;top:408px;width:53px;text-align:right;padding-right:4px;font-family:'Liberation Sans',sans-serif;font-size:14px;font-weight:bold;font-style:italic;transform:scaleX(0.91);transform-origin:right center;">0.000</div>
<div class="t" style="left:741px;top:408px;width:54px;text-align:right;padding-right:4px;font-family:'Liberation Sans',sans-serif;font-size:14px;font-weight:bold;font-style:italic;transform:scaleX(0.91);transform-origin:right center;">21.170</div>
<div class="t" style="left:795px;top:409px;width:59px;text-align:center;font-family:'Liberation Serif',serif;font-size:13px;font-weight:bold;transform:scaleX(1.15);transform-origin:center center;">0%</div>
<div class="t" style="left:854px;top:409px;width:48px;text-align:center;font-family:'Liberation Serif',serif;font-size:13px;font-weight:bold;transform:scaleX(1.15);transform-origin:center center;">0%</div>
<div class="t" style="left:2px;top:429px;width:60px;text-align:center;font-family:'Liberation Sans',sans-serif;font-size:13.33px;">18</div>
<div class="t" style="left:62px;top:429px;width:61px;text-align:left;padding-left:2px;font-family:'Liberation Sans',sans-serif;font-size:13.33px;">P2</div>
<div class="t" style="left:123px;top:429px;width:65px;text-align:left;padding-left:2px;font-family:'Liberation Sans',sans-serif;font-size:13.33px;">B4</div>
<div class="t" style="left:188px;top:428px;width:61px;text-align:right;padding-right:3px;font-family:'Liberation Serif',serif;font-size:15px;font-weight:bold;transform:scaleX(0.93);transform-origin:right center;">111.90</div>
<div class="t" style="left:249px;top:428px;width:48px;text-align:center;font-family:'Liberation Serif',serif;font-size:14.5px;">0.20</div>
<div class="t" style="left:297px;top:428px;width:47px;text-align:center;font-family:'Liberation Serif',serif;font-size:14.5px;">0.20</div>
<div class="t" style="left:346px;top:429px;width:69px;text-align:center;font-family:'Liberation Sans',sans-serif;font-size:13.33px;">OMM</div>
<div class="t" style="left:416px;top:428px;width:56px;text-align:right;padding-right:2px;font-family:'Liberation Sans',sans-serif;font-size:14px;font-weight:bold;transform:scaleX(0.9);transform-origin:right center;">111.90</div>
<div class="t" style="left:473px;top:428px;width:52px;text-align:right;padding-right:2px;font-family:'Liberation Sans',sans-serif;font-size:14px;font-weight:bold;transform:scaleX(0.9);transform-origin:right center;">111.90</div>
<div class="t" style="left:526px;top:428px;width:53px;text-align:right;padding-right:2px;font-family:'Liberation Sans',sans-serif;font-size:14px;font-weight:bold;transform:scaleX(0.9);transform-origin:right center;">111.90</div>
<div class="t" style="left:580px;top:428px;width:53px;text-align:right;padding-right:4px;font-family:'Liberation Sans',sans-serif;font-size:14px;font-weight:bold;font-style:italic;transform:scaleX(0.91);transform-origin:right center;">0.000</div>
<div class="t" style="left:634px;top:428px;width:53px;text-align:right;padding-right:4px;font-family:'Liberation Sans',sans-serif;font-size:14px;font-weight:bold;font-style:italic;transform:scaleX(0.91);transform-origin:right center;">0.000</div>
<div class="t" style="left:688px;top:428px;width:53px;text-align:right;padding-right:4px;font-family:'Liberation Sans',sans-serif;font-size:14px;font-weight:bold;font-style:italic;transform:scaleX(0.91);transform-origin:right center;">0.000</div>
<div class="t" style="left:741px;top:428px;width:54px;text-align:right;padding-right:4px;font-family:'Liberation Sans',sans-serif;font-size:14px;font-weight:bold;font-style:italic;transform:scaleX(0.91);transform-origin:right center;">111.900</div>
<div class="t" style="left:795px;top:429px;width:59px;text-align:center;font-family:'Liberation Serif',serif;font-size:13px;font-weight:bold;transform:scaleX(1.15);transform-origin:center center;">0%</div>
<div class="t" style="left:854px;top:429px;width:48px;text-align:center;font-family:'Liberation Serif',serif;font-size:13px;font-weight:bold;transform:scaleX(1.15);transform-origin:center center;">0%</div>
<div class="t" style="left:2px;top:449px;width:60px;text-align:center;font-family:'Liberation Sans',sans-serif;font-size:13.33px;">19</div>
<div class="t" style="left:62px;top:449px;width:61px;text-align:left;padding-left:2px;font-family:'Liberation Sans',sans-serif;font-size:13.33px;">P2</div>
<div class="t" style="left:123px;top:449px;width:65px;text-align:left;padding-left:2px;font-family:'Liberation Sans',sans-serif;font-size:13.33px;">B4</div>
<div class="t" style="left:188px;top:448px;width:61px;text-align:right;padding-right:3px;font-family:'Liberation Serif',serif;font-size:15px;font-weight:bold;transform:scaleX(0.93);transform-origin:right center;">2.20</div>
<div class="t" style="left:249px;top:448px;width:48px;text-align:center;font-family:'Liberation Serif',serif;font-size:14.5px;">0.10</div>
<div class="t" style="left:297px;top:448px;width:47px;text-align:center;font-family:'Liberation Serif',serif;font-size:14.5px;">0.00</div>
<div class="t" style="left:346px;top:449px;width:69px;text-align:center;font-family:'Liberation Sans',sans-serif;font-size:13.33px;">OMM</div>
<div class="t" style="left:416px;top:448px;width:56px;text-align:right;padding-right:2px;font-family:'Liberation Sans',sans-serif;font-size:14px;font-weight:bold;transform:scaleX(0.9);transform-origin:right center;">2.20</div>
<div class="t" style="left:473px;top:448px;width:52px;text-align:right;padding-right:2px;font-family:'Liberation Sans',sans-serif;font-size:14px;font-weight:bold;transform:scaleX(0.9);transform-origin:right center;">2.20</div>
<div class="t" style="left:526px;top:448px;width:53px;text-align:right;padding-right:2px;font-family:'Liberation Sans',sans-serif;font-size:14px;font-weight:bold;transform:scaleX(0.9);transform-origin:right center;">2.20</div>
<div class="t" style="left:580px;top:448px;width:53px;text-align:right;padding-right:4px;font-family:'Liberation Sans',sans-serif;font-size:14px;font-weight:bold;font-style:italic;transform:scaleX(0.91);transform-origin:right center;">0.000</div>
<div class="t" style="left:634px;top:448px;width:53px;text-align:right;padding-right:4px;font-family:'Liberation Sans',sans-serif;font-size:14px;font-weight:bold;font-style:italic;transform:scaleX(0.91);transform-origin:right center;">0.000</div>
<div class="t" style="left:688px;top:448px;width:53px;text-align:right;padding-right:4px;font-family:'Liberation Sans',sans-serif;font-size:14px;font-weight:bold;font-style:italic;transform:scaleX(0.91);transform-origin:right center;">0.000</div>
<div class="t" style="left:741px;top:448px;width:54px;text-align:right;padding-right:4px;font-family:'Liberation Sans',sans-serif;font-size:14px;font-weight:bold;font-style:italic;transform:scaleX(0.91);transform-origin:right center;">2.200</div>
<div class="t" style="left:795px;top:449px;width:59px;text-align:center;font-family:'Liberation Serif',serif;font-size:13px;font-weight:bold;transform:scaleX(1.15);transform-origin:center center;">0%</div>
<div class="t" style="left:854px;top:449px;width:48px;text-align:center;font-family:'Liberation Serif',serif;font-size:13.5px;font-weight:bold;">N/A</div>
<div class="t" style="left:952px;top:449px;width:44px;text-align:center;font-family:'Liberation Serif',serif;font-size:13px;font-weight:bold;color:#e00000;">Alert</div>
<div class="t" style="left:997px;top:449px;width:87px;text-align:center;font-family:'Liberation Serif',serif;font-size:13px;font-weight:bold;color:#e00000;">Alert</div>
<div class="t" style="left:2px;top:469px;width:60px;text-align:center;font-family:'Liberation Sans',sans-serif;font-size:13.33px;">20</div>
<div class="t" style="left:62px;top:469px;width:61px;text-align:left;padding-left:2px;font-family:'Liberation Sans',sans-serif;font-size:13.33px;">P2</div>
<div class="t" style="left:123px;top:469px;width:65px;text-align:left;padding-left:2px;font-family:'Liberation Sans',sans-serif;font-size:13.33px;">C4</div>
<div class="t" style="left:188px;top:468px;width:61px;text-align:right;padding-right:3px;font-family:'Liberation Serif',serif;font-size:15px;font-weight:bold;transform:scaleX(0.93);transform-origin:right center;">70.16</div>
<div class="t" style="left:249px;top:468px;width:48px;text-align:center;font-family:'Liberation Serif',serif;font-size:14.5px;">0.20</div>
<div class="t" style="left:297px;top:468px;width:47px;text-align:center;font-family:'Liberation Serif',serif;font-size:14.5px;">0.20</div>
<div class="t" style="left:346px;top:469px;width:69px;text-align:center;font-family:'Liberation Sans',sans-serif;font-size:13.33px;">OMM</div>
<div class="t" style="left:416px;top:468px;width:56px;text-align:right;padding-right:2px;font-family:'Liberation Sans',sans-serif;font-size:14px;font-weight:bold;transform:scaleX(0.9);transform-origin:right center;">70.16</div>
<div class="t" style="left:473px;top:468px;width:52px;text-align:right;padding-right:2px;font-family:'Liberation Sans',sans-serif;font-size:14px;font-weight:bold;transform:scaleX(0.9);transform-origin:right center;">70.16</div>
<div class="t" style="left:526px;top:468px;width:53px;text-align:right;padding-right:2px;font-family:'Liberation Sans',sans-serif;font-size:14px;font-weight:bold;transform:scaleX(0.9);transform-origin:right center;">70.16</div>
<div class="t" style="left:580px;top:468px;width:53px;text-align:right;padding-right:4px;font-family:'Liberation Sans',sans-serif;font-size:14px;font-weight:bold;font-style:italic;transform:scaleX(0.91);transform-origin:right center;">0.000</div>
<div class="t" style="left:634px;top:468px;width:53px;text-align:right;padding-right:4px;font-family:'Liberation Sans',sans-serif;font-size:14px;font-weight:bold;font-style:italic;transform:scaleX(0.91);transform-origin:right center;">0.000</div>
<div class="t" style="left:688px;top:468px;width:53px;text-align:right;padding-right:4px;font-family:'Liberation Sans',sans-serif;font-size:14px;font-weight:bold;font-style:italic;transform:scaleX(0.91);transform-origin:right center;">0.000</div>
<div class="t" style="left:741px;top:468px;width:54px;text-align:right;padding-right:4px;font-family:'Liberation Sans',sans-serif;font-size:14px;font-weight:bold;font-style:italic;transform:scaleX(0.91);transform-origin:right center;">70.160</div>
<div class="t" style="left:795px;top:469px;width:59px;text-align:center;font-family:'Liberation Serif',serif;font-size:13px;font-weight:bold;transform:scaleX(1.15);transform-origin:center center;">0%</div>
<div class="t" style="left:854px;top:469px;width:48px;text-align:center;font-family:'Liberation Serif',serif;font-size:13px;font-weight:bold;transform:scaleX(1.15);transform-origin:center center;">0%</div>
<div class="t" style="left:2px;top:489px;width:60px;text-align:center;font-family:'Liberation Sans',sans-serif;font-size:13.33px;">21</div>
<div class="t" style="left:62px;top:489px;width:61px;text-align:left;padding-left:2px;font-family:'Liberation Sans',sans-serif;font-size:13.33px;">P2</div>
<div class="t" style="left:123px;top:489px;width:65px;text-align:left;padding-left:2px;font-family:'Liberation Sans',sans-serif;font-size:13.33px;">B4</div>
<div class="t" style="left:188px;top:488px;width:61px;text-align:right;padding-right:3px;font-family:'Liberation Serif',serif;font-size:15px;font-weight:bold;transform:scaleX(0.93);transform-origin:right center;">70.16</div>
<div class="t" style="left:249px;top:488px;width:48px;text-align:center;font-family:'Liberation Serif',serif;font-size:14.5px;">0.20</div>
<div class="t" style="left:297px;top:488px;width:47px;text-align:center;font-family:'Liberation Serif',serif;font-size:14.5px;">0.20</div>
<div class="t" style="left:346px;top:489px;width:69px;text-align:center;font-family:'Liberation Sans',sans-serif;font-size:13.33px;">OMM</div>
<div class="t" style="left:416px;top:488px;width:56px;text-align:right;padding-right:2px;font-family:'Liberation Sans',sans-serif;font-size:14px;font-weight:bold;transform:scaleX(0.9);transform-origin:right center;">70.16</div>
<div class="t" style="left:473px;top:488px;width:52px;text-align:right;padding-right:2px;font-family:'Liberation Sans',sans-serif;font-size:14px;font-weight:bold;transform:scaleX(0.9);transform-origin:right center;">70.16</div>
<div class="t" style="left:526px;top:488px;width:53px;text-align:right;padding-right:2px;font-family:'Liberation Sans',sans-serif;font-size:14px;font-weight:bold;transform:scaleX(0.9);transform-origin:right center;">70.16</div>
<div class="t" style="left:580px;top:488px;width:53px;text-align:right;padding-right:4px;font-family:'Liberation Sans',sans-serif;font-size:14px;font-weight:bold;font-style:italic;transform:scaleX(0.91);transform-origin:right center;">0.000</div>
<div class="t" style="left:634px;top:488px;width:53px;text-align:right;padding-right:4px;font-family:'Liberation Sans',sans-serif;font-size:14px;font-weight:bold;font-style:italic;transform:scaleX(0.91);transform-origin:right center;">0.000</div>
<div class="t" style="left:688px;top:488px;width:53px;text-align:right;padding-right:4px;font-family:'Liberation Sans',sans-serif;font-size:14px;font-weight:bold;font-style:italic;transform:scaleX(0.91);transform-origin:right center;">0.000</div>
<div class="t" style="left:741px;top:488px;width:54px;text-align:right;padding-right:4px;font-family:'Liberation Sans',sans-serif;font-size:14px;font-weight:bold;font-style:italic;transform:scaleX(0.91);transform-origin:right center;">70.160</div>
<div class="t" style="left:795px;top:489px;width:59px;text-align:center;font-family:'Liberation Serif',serif;font-size:13px;font-weight:bold;transform:scaleX(1.15);transform-origin:center center;">0%</div>
<div class="t" style="left:854px;top:489px;width:48px;text-align:center;font-family:'Liberation Serif',serif;font-size:13px;font-weight:bold;transform:scaleX(1.15);transform-origin:center center;">0%</div>
<div class="t" style="left:2px;top:509px;width:60px;text-align:center;font-family:'Liberation Sans',sans-serif;font-size:13.33px;">22</div>
<div class="t" style="left:62px;top:509px;width:61px;text-align:left;padding-left:2px;font-family:'Liberation Sans',sans-serif;font-size:13.33px;">P2</div>
<div class="t" style="left:123px;top:509px;width:65px;text-align:left;padding-left:2px;font-family:'Liberation Sans',sans-serif;font-size:13.33px;">B4</div>
<div class="t" style="left:188px;top:508px;width:61px;text-align:right;padding-right:3px;font-family:'Liberation Serif',serif;font-size:15px;font-weight:bold;transform:scaleX(0.93);transform-origin:right center;">71.96</div>
<div class="t" style="left:249px;top:508px;width:48px;text-align:center;font-family:'Liberation Serif',serif;font-size:14.5px;">0.20</div>
<div class="t" style="left:297px;top:508px;width:47px;text-align:center;font-family:'Liberation Serif',serif;font-size:14.5px;">0.20</div>
<div class="t" style="left:346px;top:509px;width:69px;text-align:center;font-family:'Liberation Sans',sans-serif;font-size:13.33px;">OMM</div>
<div class="t" style="left:416px;top:508px;width:56px;text-align:right;padding-right:2px;font-family:'Liberation Sans',sans-serif;font-size:14px;font-weight:bold;transform:scaleX(0.9);transform-origin:right center;">71.96</div>
<div class="t" style="left:473px;top:508px;width:52px;text-align:right;padding-right:2px;font-family:'Liberation Sans',sans-serif;font-size:14px;font-weight:bold;transform:scaleX(0.9);transform-origin:right center;">71.96</div>
<div class="t" style="left:526px;top:508px;width:53px;text-align:right;padding-right:2px;font-family:'Liberation Sans',sans-serif;font-size:14px;font-weight:bold;transform:scaleX(0.9);transform-origin:right center;">71.96</div>
<div class="t" style="left:580px;top:508px;width:53px;text-align:right;padding-right:4px;font-family:'Liberation Sans',sans-serif;font-size:14px;font-weight:bold;font-style:italic;transform:scaleX(0.91);transform-origin:right center;">0.000</div>
<div class="t" style="left:634px;top:508px;width:53px;text-align:right;padding-right:4px;font-family:'Liberation Sans',sans-serif;font-size:14px;font-weight:bold;font-style:italic;transform:scaleX(0.91);transform-origin:right center;">0.000</div>
<div class="t" style="left:688px;top:508px;width:53px;text-align:right;padding-right:4px;font-family:'Liberation Sans',sans-serif;font-size:14px;font-weight:bold;font-style:italic;transform:scaleX(0.91);transform-origin:right center;">0.000</div>
<div class="t" style="left:741px;top:508px;width:54px;text-align:right;padding-right:4px;font-family:'Liberation Sans',sans-serif;font-size:14px;font-weight:bold;font-style:italic;transform:scaleX(0.91);transform-origin:right center;">71.960</div>
<div class="t" style="left:795px;top:509px;width:59px;text-align:center;font-family:'Liberation Serif',serif;font-size:13px;font-weight:bold;transform:scaleX(1.15);transform-origin:center center;">0%</div>
<div class="t" style="left:854px;top:509px;width:48px;text-align:center;font-family:'Liberation Serif',serif;font-size:13px;font-weight:bold;transform:scaleX(1.15);transform-origin:center center;">0%</div>
<div class="t" style="left:2px;top:529px;width:60px;text-align:center;font-family:'Liberation Sans',sans-serif;font-size:13.33px;">23</div>
<div class="t" style="left:62px;top:529px;width:61px;text-align:left;padding-left:2px;font-family:'Liberation Sans',sans-serif;font-size:13.33px;">P2</div>
<div class="t" style="left:123px;top:529px;width:65px;text-align:left;padding-left:2px;font-family:'Liberation Sans',sans-serif;font-size:13.33px;">C4</div>
<div class="t" style="left:188px;top:528px;width:61px;text-align:right;padding-right:3px;font-family:'Liberation Serif',serif;font-size:15px;font-weight:bold;transform:scaleX(0.93);transform-origin:right center;">71.79</div>
<div class="t" style="left:249px;top:528px;width:48px;text-align:center;font-family:'Liberation Serif',serif;font-size:14.5px;">0.20</div>
<div class="t" style="left:297px;top:528px;width:47px;text-align:center;font-family:'Liberation Serif',serif;font-size:14.5px;">0.20</div>
<div class="t" style="left:346px;top:529px;width:69px;text-align:center;font-family:'Liberation Sans',sans-serif;font-size:13.33px;">OMM</div>
<div class="t" style="left:416px;top:528px;width:56px;text-align:right;padding-right:2px;font-family:'Liberation Sans',sans-serif;font-size:14px;font-weight:bold;transform:scaleX(0.9);transform-origin:right center;">71.79</div>
<div class="t" style="left:473px;top:528px;width:52px;text-align:right;padding-right:2px;font-family:'Liberation Sans',sans-serif;font-size:14px;font-weight:bold;transform:scaleX(0.9);transform-origin:right center;">71.79</div>
<div class="t" style="left:526px;top:528px;width:53px;text-align:right;padding-right:2px;font-family:'Liberation Sans',sans-serif;font-size:14px;font-weight:bold;transform:scaleX(0.9);transform-origin:right center;">71.79</div>
<div class="t" style="left:580px;top:528px;width:53px;text-align:right;padding-right:4px;font-family:'Liberation Sans',sans-serif;font-size:14px;font-weight:bold;font-style:italic;transform:scaleX(0.91);transform-origin:right center;">0.000</div>
<div class="t" style="left:634px;top:528px;width:53px;text-align:right;padding-right:4px;font-family:'Liberation Sans',sans-serif;font-size:14px;font-weight:bold;font-style:italic;transform:scaleX(0.91);transform-origin:right center;">0.000</div>
<div class="t" style="left:688px;top:528px;width:53px;text-align:right;padding-right:4px;font-family:'Liberation Sans',sans-serif;font-size:14px;font-weight:bold;font-style:italic;transform:scaleX(0.91);transform-origin:right center;">0.000</div>
<div class="t" style="left:741px;top:528px;width:54px;text-align:right;padding-right:4px;font-family:'Liberation Sans',sans-serif;font-size:14px;font-weight:bold;font-style:italic;transform:scaleX(0.91);transform-origin:right center;">71.790</div>
<div class="t" style="left:795px;top:529px;width:59px;text-align:center;font-family:'Liberation Serif',serif;font-size:13px;font-weight:bold;transform:scaleX(1.15);transform-origin:center center;">0%</div>
<div class="t" style="left:854px;top:529px;width:48px;text-align:center;font-family:'Liberation Serif',serif;font-size:13px;font-weight:bold;transform:scaleX(1.15);transform-origin:center center;">0%</div>
<div class="t" style="left:2px;top:549px;width:60px;text-align:center;font-family:'Liberation Sans',sans-serif;font-size:13.33px;">24</div>
<div class="t" style="left:62px;top:549px;width:61px;text-align:left;padding-left:2px;font-family:'Liberation Sans',sans-serif;font-size:13.33px;">P2</div>
<div class="t" style="left:123px;top:549px;width:65px;text-align:left;padding-left:2px;font-family:'Liberation Sans',sans-serif;font-size:13.33px;">C4</div>
<div class="t" style="left:188px;top:548px;width:61px;text-align:right;padding-right:3px;font-family:'Liberation Serif',serif;font-size:15px;font-weight:bold;transform:scaleX(0.93);transform-origin:right center;">58.15</div>
<div class="t" style="left:249px;top:548px;width:48px;text-align:center;font-family:'Liberation Serif',serif;font-size:14.5px;">0.10</div>
<div class="t" style="left:297px;top:548px;width:47px;text-align:center;font-family:'Liberation Serif',serif;font-size:14.5px;">0.10</div>
<div class="t" style="left:346px;top:549px;width:69px;text-align:center;font-family:'Liberation Sans',sans-serif;font-size:13.33px;">OMM</div>
<div class="t" style="left:416px;top:548px;width:56px;text-align:right;padding-right:2px;font-family:'Liberation Sans',sans-serif;font-size:14px;font-weight:bold;transform:scaleX(0.9);transform-origin:right center;">58.15</div>
<div class="t" style="left:473px;top:548px;width:52px;text-align:right;padding-right:2px;font-family:'Liberation Sans',sans-serif;font-size:14px;font-weight:bold;transform:scaleX(0.9);transform-origin:right center;">58.15</div>
<div class="t" style="left:526px;top:548px;width:53px;text-align:right;padding-right:2px;font-family:'Liberation Sans',sans-serif;font-size:14px;font-weight:bold;transform:scaleX(0.9);transform-origin:right center;">58.15</div>
<div class="t" style="left:580px;top:548px;width:53px;text-align:right;padding-right:4px;font-family:'Liberation Sans',sans-serif;font-size:14px;font-weight:bold;font-style:italic;transform:scaleX(0.91);transform-origin:right center;">0.000</div>
<div class="t" style="left:634px;top:548px;width:53px;text-align:right;padding-right:4px;font-family:'Liberation Sans',sans-serif;font-size:14px;font-weight:bold;font-style:italic;transform:scaleX(0.91);transform-origin:right center;">0.000</div>
<div class="t" style="left:688px;top:548px;width:53px;text-align:right;padding-right:4px;font-family:'Liberation Sans',sans-serif;font-size:14px;font-weight:bold;font-style:italic;transform:scaleX(0.91);transform-origin:right center;">0.000</div>
<div class="t" style="left:741px;top:548px;width:54px;text-align:right;padding-right:4px;font-family:'Liberation Sans',sans-serif;font-size:14px;font-weight:bold;font-style:italic;transform:scaleX(0.91);transform-origin:right center;">58.150</div>
<div class="t" style="left:795px;top:549px;width:59px;text-align:center;font-family:'Liberation Serif',serif;font-size:13px;font-weight:bold;transform:scaleX(1.15);transform-origin:center center;">0%</div>
<div class="t" style="left:854px;top:549px;width:48px;text-align:center;font-family:'Liberation Serif',serif;font-size:13px;font-weight:bold;transform:scaleX(1.15);transform-origin:center center;">0%</div>
<div class="t" style="left:2px;top:569px;width:60px;text-align:center;font-family:'Liberation Sans',sans-serif;font-size:13.33px;">25</div>
<div class="t" style="left:62px;top:569px;width:61px;text-align:left;padding-left:2px;font-family:'Liberation Sans',sans-serif;font-size:13.33px;">P2</div>
<div class="t" style="left:123px;top:569px;width:65px;text-align:left;padding-left:2px;font-family:'Liberation Sans',sans-serif;font-size:13.33px;">B4</div>
<div class="t" style="left:188px;top:568px;width:61px;text-align:right;padding-right:3px;font-family:'Liberation Serif',serif;font-size:15px;font-weight:bold;transform:scaleX(0.93);transform-origin:right center;">2.00</div>
<div class="t" style="left:249px;top:568px;width:48px;text-align:center;font-family:'Liberation Serif',serif;font-size:14.5px;">0.10</div>
<div class="t" style="left:297px;top:568px;width:47px;text-align:center;font-family:'Liberation Serif',serif;font-size:14.5px;">0.00</div>
<div class="t" style="left:346px;top:569px;width:69px;text-align:center;font-family:'Liberation Sans',sans-serif;font-size:13.33px;">OMM</div>
<div class="t" style="left:416px;top:568px;width:56px;text-align:right;padding-right:2px;font-family:'Liberation Sans',sans-serif;font-size:14px;font-weight:bold;transform:scaleX(0.9);transform-origin:right center;">2.00</div>
<div class="t" style="left:473px;top:568px;width:52px;text-align:right;padding-right:2px;font-family:'Liberation Sans',sans-serif;font-size:14px;font-weight:bold;transform:scaleX(0.9);transform-origin:right center;">2.00</div>
<div class="t" style="left:526px;top:568px;width:53px;text-align:right;padding-right:2px;font-family:'Liberation Sans',sans-serif;font-size:14px;font-weight:bold;transform:scaleX(0.9);transform-origin:right center;">2.00</div>
<div class="t" style="left:580px;top:568px;width:53px;text-align:right;padding-right:4px;font-family:'Liberation Sans',sans-serif;font-size:14px;font-weight:bold;font-style:italic;transform:scaleX(0.91);transform-origin:right center;">0.000</div>
<div class="t" style="left:634px;top:568px;width:53px;text-align:right;padding-right:4px;font-family:'Liberation Sans',sans-serif;font-size:14px;font-weight:bold;font-style:italic;transform:scaleX(0.91);transform-origin:right center;">0.000</div>
<div class="t" style="left:688px;top:568px;width:53px;text-align:right;padding-right:4px;font-family:'Liberation Sans',sans-serif;font-size:14px;font-weight:bold;font-style:italic;transform:scaleX(0.91);transform-origin:right center;">0.000</div>
<div class="t" style="left:741px;top:568px;width:54px;text-align:right;padding-right:4px;font-family:'Liberation Sans',sans-serif;font-size:14px;font-weight:bold;font-style:italic;transform:scaleX(0.91);transform-origin:right center;">2.000</div>
<div class="t" style="left:795px;top:569px;width:59px;text-align:center;font-family:'Liberation Serif',serif;font-size:13px;font-weight:bold;transform:scaleX(1.15);transform-origin:center center;">0%</div>
<div class="t" style="left:854px;top:569px;width:48px;text-align:center;font-family:'Liberation Serif',serif;font-size:13.5px;font-weight:bold;">N/A</div>
<div class="t" style="left:952px;top:569px;width:44px;text-align:center;font-family:'Liberation Serif',serif;font-size:13px;font-weight:bold;color:#e00000;">Alert</div>
<div class="t" style="left:997px;top:569px;width:87px;text-align:center;font-family:'Liberation Serif',serif;font-size:13px;font-weight:bold;color:#e00000;">Alert</div>
<div class="t" style="left:2px;top:589px;width:60px;text-align:center;font-family:'Liberation Sans',sans-serif;font-size:13.33px;">26</div>
<div class="t" style="left:62px;top:589px;width:61px;text-align:left;padding-left:2px;font-family:'Liberation Sans',sans-serif;font-size:13.33px;">P2</div>
<div class="t" style="left:123px;top:589px;width:65px;text-align:left;padding-left:2px;font-family:'Liberation Sans',sans-serif;font-size:13.33px;">C4</div>
<div class="t" style="left:188px;top:588px;width:61px;text-align:right;padding-right:3px;font-family:'Liberation Serif',serif;font-size:15px;font-weight:bold;transform:scaleX(0.93);transform-origin:right center;">98.77</div>
<div class="t" style="left:249px;top:588px;width:48px;text-align:center;font-family:'Liberation Serif',serif;font-size:14.5px;">0.20</div>
<div class="t" style="left:297px;top:588px;width:47px;text-align:center;font-family:'Liberation Serif',serif;font-size:14.5px;">0.20</div>
<div class="t" style="left:346px;top:589px;width:69px;text-align:center;font-family:'Liberation Sans',sans-serif;font-size:13.33px;">OMM</div>
<div class="t" style="left:416px;top:588px;width:56px;text-align:right;padding-right:2px;font-family:'Liberation Sans',sans-serif;font-size:14px;font-weight:bold;transform:scaleX(0.9);transform-origin:right center;">98.77</div>
<div class="t" style="left:473px;top:588px;width:52px;text-align:right;padding-right:2px;font-family:'Liberation Sans',sans-serif;font-size:14px;font-weight:bold;transform:scaleX(0.9);transform-origin:right center;">98.77</div>
<div class="t" style="left:526px;top:588px;width:53px;text-align:right;padding-right:2px;font-family:'Liberation Sans',sans-serif;font-size:14px;font-weight:bold;transform:scaleX(0.9);transform-origin:right center;">98.77</div>
<div class="t" style="left:580px;top:588px;width:53px;text-align:right;padding-right:4px;font-family:'Liberation Sans',sans-serif;font-size:14px;font-weight:bold;font-style:italic;transform:scaleX(0.91);transform-origin:right center;">0.000</div>
<div class="t" style="left:634px;top:588px;width:53px;text-align:right;padding-right:4px;font-family:'Liberation Sans',sans-serif;font-size:14px;font-weight:bold;font-style:italic;transform:scaleX(0.91);transform-origin:right center;">0.000</div>
<div class="t" style="left:688px;top:588px;width:53px;text-align:right;padding-right:4px;font-family:'Liberation Sans',sans-serif;font-size:14px;font-weight:bold;font-style:italic;transform:scaleX(0.91);transform-origin:right center;">0.000</div>
<div class="t" style="left:741px;top:588px;width:54px;text-align:right;padding-right:4px;font-family:'Liberation Sans',sans-serif;font-size:14px;font-weight:bold;font-style:italic;transform:scaleX(0.91);transform-origin:right center;">98.770</div>
<div class="t" style="left:795px;top:589px;width:59px;text-align:center;font-family:'Liberation Serif',serif;font-size:13px;font-weight:bold;transform:scaleX(1.15);transform-origin:center center;">0%</div>
<div class="t" style="left:854px;top:589px;width:48px;text-align:center;font-family:'Liberation Serif',serif;font-size:13px;font-weight:bold;transform:scaleX(1.15);transform-origin:center center;">0%</div>
<div class="t" style="left:2px;top:609px;width:60px;text-align:center;font-family:'Liberation Sans',sans-serif;font-size:13.33px;">27</div>
<div class="t" style="left:62px;top:609px;width:61px;text-align:left;padding-left:2px;font-family:'Liberation Sans',sans-serif;font-size:13.33px;">P2</div>
<div class="t" style="left:123px;top:609px;width:65px;text-align:left;padding-left:2px;font-family:'Liberation Sans',sans-serif;font-size:13.33px;">C4</div>
<div class="t" style="left:188px;top:608px;width:61px;text-align:right;padding-right:3px;font-family:'Liberation Serif',serif;font-size:15px;font-weight:bold;transform:scaleX(0.93);transform-origin:right center;">106.58</div>
<div class="t" style="left:249px;top:608px;width:48px;text-align:center;font-family:'Liberation Serif',serif;font-size:14.5px;">0.20</div>
<div class="t" style="left:297px;top:608px;width:47px;text-align:center;font-family:'Liberation Serif',serif;font-size:14.5px;">0.20</div>
<div class="t" style="left:346px;top:609px;width:69px;text-align:center;font-family:'Liberation Sans',sans-serif;font-size:13.33px;">OMM</div>
<div class="t" style="left:416px;top:608px;width:56px;text-align:right;padding-right:2px;font-family:'Liberation Sans',sans-serif;font-size:14px;font-weight:bold;transform:scaleX(0.9);transform-origin:right center;">47.33</div>
<div class="t" style="left:473px;top:608px;width:52px;text-align:right;padding-right:2px;font-family:'Liberation Sans',sans-serif;font-size:14px;font-weight:bold;transform:scaleX(0.9);transform-origin:right center;">47.33</div>
<div class="t" style="left:526px;top:608px;width:53px;text-align:right;padding-right:2px;font-family:'Liberation Sans',sans-serif;font-size:14px;font-weight:bold;transform:scaleX(0.9);transform-origin:right center;">47.33</div>
<div class="t" style="left:580px;top:608px;width:53px;text-align:right;padding-right:4px;font-family:'Liberation Sans',sans-serif;font-size:14px;font-weight:bold;font-style:italic;transform:scaleX(0.91);transform-origin:right center;">-59.253</div>
<div class="t" style="left:634px;top:608px;width:53px;text-align:right;padding-right:4px;font-family:'Liberation Sans',sans-serif;font-size:14px;font-weight:bold;font-style:italic;transform:scaleX(0.91);transform-origin:right center;">-59.253</div>
<div class="t" style="left:688px;top:608px;width:53px;text-align:right;padding-right:4px;font-family:'Liberation Sans',sans-serif;font-size:14px;font-weight:bold;font-style:italic;transform:scaleX(0.91);transform-origin:right center;">-59.253</div>
<div class="t" style="left:741px;top:608px;width:54px;text-align:right;padding-right:4px;font-family:'Liberation Sans',sans-serif;font-size:14px;font-weight:bold;font-style:italic;transform:scaleX(0.91);transform-origin:right center;">47.327</div>
<div class="t" style="left:795px;top:609px;width:59px;text-align:center;font-family:'Liberation Serif',serif;font-size:13px;font-weight:bold;transform:scaleX(1.15);transform-origin:center center;">0%</div>
<div class="t" style="left:855px;top:609px;width:47px;text-align:center;font-family:'Liberation Serif',serif;font-size:14px;font-weight:bold;">######</div>
<div class="t" style="left:952px;top:609px;width:44px;text-align:center;font-family:'Liberation Serif',serif;font-size:13px;font-weight:bold;color:#e00000;">Reject</div>
<div class="t" style="left:997px;top:609px;width:87px;text-align:center;font-family:'Liberation Serif',serif;font-size:13px;font-weight:bold;color:#e00000;">Reject</div>
<div class="t" style="left:2px;top:629px;width:60px;text-align:center;font-family:'Liberation Sans',sans-serif;font-size:13.33px;">28</div>
<div class="t" style="left:62px;top:629px;width:61px;text-align:left;padding-left:2px;font-family:'Liberation Sans',sans-serif;font-size:13.33px;">P2</div>
<div class="t" style="left:123px;top:629px;width:65px;text-align:left;padding-left:2px;font-family:'Liberation Sans',sans-serif;font-size:13.33px;">B4</div>
<div class="t" style="left:188px;top:628px;width:61px;text-align:right;padding-right:3px;font-family:'Liberation Serif',serif;font-size:15px;font-weight:bold;transform:scaleX(0.93);transform-origin:right center;">103.68</div>
<div class="t" style="left:249px;top:628px;width:48px;text-align:center;font-family:'Liberation Serif',serif;font-size:14.5px;">0.20</div>
<div class="t" style="left:297px;top:628px;width:47px;text-align:center;font-family:'Liberation Serif',serif;font-size:14.5px;">0.20</div>
<div class="t" style="left:346px;top:629px;width:69px;text-align:center;font-family:'Liberation Sans',sans-serif;font-size:13.33px;">OMM</div>
<div class="t" style="left:416px;top:628px;width:56px;text-align:right;padding-right:2px;font-family:'Liberation Sans',sans-serif;font-size:14px;font-weight:bold;transform:scaleX(0.9);transform-origin:right center;">44.73</div>
<div class="t" style="left:473px;top:628px;width:52px;text-align:right;padding-right:2px;font-family:'Liberation Sans',sans-serif;font-size:14px;font-weight:bold;transform:scaleX(0.9);transform-origin:right center;">44.73</div>
<div class="t" style="left:526px;top:628px;width:53px;text-align:right;padding-right:2px;font-family:'Liberation Sans',sans-serif;font-size:14px;font-weight:bold;transform:scaleX(0.9);transform-origin:right center;">44.73</div>
<div class="t" style="left:580px;top:628px;width:53px;text-align:right;padding-right:4px;font-family:'Liberation Sans',sans-serif;font-size:14px;font-weight:bold;font-style:italic;transform:scaleX(0.91);transform-origin:right center;">-58.952</div>
<div class="t" style="left:634px;top:628px;width:53px;text-align:right;padding-right:4px;font-family:'Liberation Sans',sans-serif;font-size:14px;font-weight:bold;font-style:italic;transform:scaleX(0.91);transform-origin:right center;">-58.952</div>
<div class="t" style="left:688px;top:628px;width:53px;text-align:right;padding-right:4px;font-family:'Liberation Sans',sans-serif;font-size:14px;font-weight:bold;font-style:italic;transform:scaleX(0.91);transform-origin:right center;">-58.952</div>
<div class="t" style="left:741px;top:628px;width:54px;text-align:right;padding-right:4px;font-family:'Liberation Sans',sans-serif;font-size:14px;font-weight:bold;font-style:italic;transform:scaleX(0.91);transform-origin:right center;">44.728</div>
<div class="t" style="left:795px;top:629px;width:59px;text-align:center;font-family:'Liberation Serif',serif;font-size:13px;font-weight:bold;transform:scaleX(1.15);transform-origin:center center;">0%</div>
<div class="t" style="left:855px;top:629px;width:47px;text-align:center;font-family:'Liberation Serif',serif;font-size:14px;font-weight:bold;">######</div>
<div class="t" style="left:952px;top:629px;width:44px;text-align:center;font-family:'Liberation Serif',serif;font-size:13px;font-weight:bold;color:#e00000;">Reject</div>
<div class="t" style="left:997px;top:629px;width:87px;text-align:center;font-family:'Liberation Serif',serif;font-size:13px;font-weight:bold;color:#e00000;">Reject</div>
<div class="t" style="left:2px;top:649px;width:60px;text-align:center;font-family:'Liberation Sans',sans-serif;font-size:13.33px;">29</div>
<div class="t" style="left:62px;top:649px;width:61px;text-align:left;padding-left:2px;font-family:'Liberation Sans',sans-serif;font-size:13.33px;">P2</div>
<div class="t" style="left:123px;top:649px;width:65px;text-align:left;padding-left:2px;font-family:'Liberation Sans',sans-serif;font-size:13.33px;">C4</div>
<div class="t" style="left:188px;top:648px;width:61px;text-align:right;padding-right:3px;font-family:'Liberation Serif',serif;font-size:15px;font-weight:bold;transform:scaleX(0.93);transform-origin:right center;">100.59</div>
<div class="t" style="left:249px;top:648px;width:48px;text-align:center;font-family:'Liberation Serif',serif;font-size:14.5px;">0.20</div>
<div class="t" style="left:297px;top:648px;width:47px;text-align:center;font-family:'Liberation Serif',serif;font-size:14.5px;">0.20</div>
<div class="t" style="left:346px;top:649px;width:69px;text-align:center;font-family:'Liberation Sans',sans-serif;font-size:13.33px;">OMM</div>
<div class="t" style="left:416px;top:648px;width:56px;text-align:right;padding-right:2px;font-family:'Liberation Sans',sans-serif;font-size:14px;font-weight:bold;transform:scaleX(0.9);transform-origin:right center;">42.13</div>
<div class="t" style="left:473px;top:648px;width:52px;text-align:right;padding-right:2px;font-family:'Liberation Sans',sans-serif;font-size:14px;font-weight:bold;transform:scaleX(0.9);transform-origin:right center;">42.13</div>
<div class="t" style="left:526px;top:648px;width:53px;text-align:right;padding-right:2px;font-family:'Liberation Sans',sans-serif;font-size:14px;font-weight:bold;transform:scaleX(0.9);transform-origin:right center;">42.13</div>
<div class="t" style="left:580px;top:648px;width:53px;text-align:right;padding-right:4px;font-family:'Liberation Sans',sans-serif;font-size:14px;font-weight:bold;font-style:italic;transform:scaleX(0.91);transform-origin:right center;">-58.462</div>
<div class="t" style="left:634px;top:648px;width:53px;text-align:right;padding-right:4px;font-family:'Liberation Sans',sans-serif;font-size:14px;font-weight:bold;font-style:italic;transform:scaleX(0.91);transform-origin:right center;">-58.462</div>
<div class="t" style="left:688px;top:648px;width:53px;text-align:right;padding-right:4px;font-family:'Liberation Sans',sans-serif;font-size:14px;font-weight:bold;font-style:italic;transform:scaleX(0.91);transform-origin:right center;">-58.462</div>
<div class="t" style="left:741px;top:648px;width:54px;text-align:right;padding-right:4px;font-family:'Liberation Sans',sans-serif;font-size:14px;font-weight:bold;font-style:italic;transform:scaleX(0.91);transform-origin:right center;">42.128</div>
<div class="t" style="left:795px;top:649px;width:59px;text-align:center;font-family:'Liberation Serif',serif;font-size:13px;font-weight:bold;transform:scaleX(1.15);transform-origin:center center;">0%</div>
<div class="t" style="left:855px;top:649px;width:47px;text-align:center;font-family:'Liberation Serif',serif;font-size:14px;font-weight:bold;">######</div>
<div class="t" style="left:952px;top:649px;width:44px;text-align:center;font-family:'Liberation Serif',serif;font-size:13px;font-weight:bold;color:#e00000;">Reject</div>
<div class="t" style="left:997px;top:649px;width:87px;text-align:center;font-family:'Liberation Serif',serif;font-size:13px;font-weight:bold;color:#e00000;">Reject</div>
<div class="t" style="left:2px;top:669px;width:60px;text-align:center;font-family:'Liberation Sans',sans-serif;font-size:13.33px;">30</div>
<div class="t" style="left:62px;top:669px;width:61px;text-align:left;padding-left:2px;font-family:'Liberation Sans',sans-serif;font-size:13.33px;">P2</div>
<div class="t" style="left:123px;top:669px;width:65px;text-align:left;padding-left:2px;font-family:'Liberation Sans',sans-serif;font-size:13.33px;">B4</div>
<div class="t" style="left:188px;top:668px;width:61px;text-align:right;padding-right:3px;font-family:'Liberation Serif',serif;font-size:15px;font-weight:bold;transform:scaleX(0.93);transform-origin:right center;">125.68</div>
<div class="t" style="left:249px;top:668px;width:48px;text-align:center;font-family:'Liberation Serif',serif;font-size:14.5px;">0.20</div>
<div class="t" style="left:297px;top:668px;width:47px;text-align:center;font-family:'Liberation Serif',serif;font-size:14.5px;">0.20</div>
<div class="t" style="left:346px;top:669px;width:69px;text-align:center;font-family:'Liberation Sans',sans-serif;font-size:13.33px;">OMM</div>
<div class="t" style="left:416px;top:668px;width:56px;text-align:right;padding-right:2px;font-family:'Liberation Sans',sans-serif;font-size:14px;font-weight:bold;transform:scaleX(0.9);transform-origin:right center;">39.53</div>
<div class="t" style="left:473px;top:668px;width:52px;text-align:right;padding-right:2px;font-family:'Liberation Sans',sans-serif;font-size:14px;font-weight:bold;transform:scaleX(0.9);transform-origin:right center;">39.53</div>
<div class="t" style="left:526px;top:668px;width:53px;text-align:right;padding-right:2px;font-family:'Liberation Sans',sans-serif;font-size:14px;font-weight:bold;transform:scaleX(0.9);transform-origin:right center;">39.53</div>
<div class="t" style="left:580px;top:668px;width:53px;text-align:right;padding-right:4px;font-family:'Liberation Sans',sans-serif;font-size:14px;font-weight:bold;font-style:italic;transform:scaleX(0.91);transform-origin:right center;">-86.152</div>
<div class="t" style="left:634px;top:668px;width:53px;text-align:right;padding-right:4px;font-family:'Liberation Sans',sans-serif;font-size:14px;font-weight:bold;font-style:italic;transform:scaleX(0.91);transform-origin:right center;">-86.152</div>
<div class="t" style="left:688px;top:668px;width:53px;text-align:right;padding-right:4px;font-family:'Liberation Sans',sans-serif;font-size:14px;font-weight:bold;font-style:italic;transform:scaleX(0.91);transform-origin:right center;">-86.152</div>
<div class="t" style="left:741px;top:668px;width:54px;text-align:right;padding-right:4px;font-family:'Liberation Sans',sans-serif;font-size:14px;font-weight:bold;font-style:italic;transform:scaleX(0.91);transform-origin:right center;">39.528</div>
<div class="t" style="left:795px;top:669px;width:59px;text-align:center;font-family:'Liberation Serif',serif;font-size:13px;font-weight:bold;transform:scaleX(1.15);transform-origin:center center;">0%</div>
<div class="t" style="left:855px;top:669px;width:47px;text-align:center;font-family:'Liberation Serif',serif;font-size:14px;font-weight:bold;">######</div>
<div class="t" style="left:952px;top:669px;width:44px;text-align:center;font-family:'Liberation Serif',serif;font-size:13px;font-weight:bold;color:#e00000;">Reject</div>
<div class="t" style="left:997px;top:669px;width:87px;text-align:center;font-family:'Liberation Serif',serif;font-size:13px;font-weight:bold;color:#e00000;">Reject</div>
<div class="t" style="left:2px;top:689px;width:60px;text-align:center;font-family:'Liberation Sans',sans-serif;font-size:13.33px;">31</div>
<div class="t" style="left:62px;top:689px;width:61px;text-align:left;padding-left:2px;font-family:'Liberation Sans',sans-serif;font-size:13.33px;">P2</div>
<div class="t" style="left:123px;top:689px;width:65px;text-align:left;padding-left:2px;font-family:'Liberation Sans',sans-serif;font-size:13.33px;">B4</div>
<div class="t" style="left:188px;top:688px;width:61px;text-align:right;padding-right:3px;font-family:'Liberation Serif',serif;font-size:15px;font-weight:bold;transform:scaleX(0.93);transform-origin:right center;">128.76</div>
<div class="t" style="left:249px;top:688px;width:48px;text-align:center;font-family:'Liberation Serif',serif;font-size:14.5px;">0.10</div>
<div class="t" style="left:297px;top:688px;width:47px;text-align:center;font-family:'Liberation Serif',serif;font-size:14.5px;">0.10</div>
<div class="t" style="left:346px;top:689px;width:69px;text-align:center;font-family:'Liberation Sans',sans-serif;font-size:13.33px;">OMM</div>
<div class="t" style="left:416px;top:688px;width:56px;text-align:right;padding-right:2px;font-family:'Liberation Sans',sans-serif;font-size:14px;font-weight:bold;transform:scaleX(0.9);transform-origin:right center;">36.93</div>
<div class="t" style="left:473px;top:688px;width:52px;text-align:right;padding-right:2px;font-family:'Liberation Sans',sans-serif;font-size:14px;font-weight:bold;transform:scaleX(0.9);transform-origin:right center;">36.93</div>
<div class="t" style="left:526px;top:688px;width:53px;text-align:right;padding-right:2px;font-family:'Liberation Sans',sans-serif;font-size:14px;font-weight:bold;transform:scaleX(0.9);transform-origin:right center;">36.93</div>
<div class="t" style="left:580px;top:688px;width:53px;text-align:right;padding-right:4px;font-family:'Liberation Sans',sans-serif;font-size:14px;font-weight:bold;font-style:italic;transform:scaleX(0.91);transform-origin:right center;">-91.831</div>
<div class="t" style="left:634px;top:688px;width:53px;text-align:right;padding-right:4px;font-family:'Liberation Sans',sans-serif;font-size:14px;font-weight:bold;font-style:italic;transform:scaleX(0.91);transform-origin:right center;">-91.831</div>
<div class="t" style="left:688px;top:688px;width:53px;text-align:right;padding-right:4px;font-family:'Liberation Sans',sans-serif;font-size:14px;font-weight:bold;font-style:italic;transform:scaleX(0.91);transform-origin:right center;">-91.831</div>
<div class="t" style="left:741px;top:688px;width:54px;text-align:right;padding-right:4px;font-family:'Liberation Sans',sans-serif;font-size:14px;font-weight:bold;font-style:italic;transform:scaleX(0.91);transform-origin:right center;">36.929</div>
<div class="t" style="left:795px;top:689px;width:59px;text-align:center;font-family:'Liberation Serif',serif;font-size:13px;font-weight:bold;transform:scaleX(1.15);transform-origin:center center;">0%</div>
<div class="t" style="left:855px;top:689px;width:47px;text-align:center;font-family:'Liberation Serif',serif;font-size:14px;font-weight:bold;">######</div>
<div class="t" style="left:952px;top:689px;width:44px;text-align:center;font-family:'Liberation Serif',serif;font-size:13px;font-weight:bold;color:#e00000;">Reject</div>
<div class="t" style="left:997px;top:689px;width:87px;text-align:center;font-family:'Liberation Serif',serif;font-size:13px;font-weight:bold;color:#e00000;">Reject</div>
<div class="t" style="left:2px;top:709px;width:60px;text-align:center;font-family:'Liberation Sans',sans-serif;font-size:13.33px;">32</div>
<div class="t" style="left:62px;top:709px;width:61px;text-align:left;padding-left:2px;font-family:'Liberation Sans',sans-serif;font-size:13.33px;">P2</div>
<div class="t" style="left:123px;top:709px;width:65px;text-align:left;padding-left:2px;font-family:'Liberation Sans',sans-serif;font-size:13.33px;">B3</div>
<div class="t" style="left:188px;top:708px;width:61px;text-align:right;padding-right:3px;font-family:'Liberation Serif',serif;font-size:15px;font-weight:bold;transform:scaleX(0.93);transform-origin:right center;">131.83</div>
<div class="t" style="left:249px;top:708px;width:48px;text-align:center;font-family:'Liberation Serif',serif;font-size:14.5px;">0.20</div>
<div class="t" style="left:297px;top:708px;width:47px;text-align:center;font-family:'Liberation Serif',serif;font-size:14.5px;">0.20</div>
<div class="t" style="left:346px;top:709px;width:69px;text-align:center;font-family:'Liberation Sans',sans-serif;font-size:13.33px;">OMM</div>
<div class="t" style="left:416px;top:708px;width:56px;text-align:right;padding-right:2px;font-family:'Liberation Sans',sans-serif;font-size:14px;font-weight:bold;transform:scaleX(0.9);transform-origin:right center;">34.33</div>
<div class="t" style="left:473px;top:708px;width:52px;text-align:right;padding-right:2px;font-family:'Liberation Sans',sans-serif;font-size:14px;font-weight:bold;transform:scaleX(0.9);transform-origin:right center;">34.33</div>
<div class="t" style="left:526px;top:708px;width:53px;text-align:right;padding-right:2px;font-family:'Liberation Sans',sans-serif;font-size:14px;font-weight:bold;transform:scaleX(0.9);transform-origin:right center;">34.33</div>
<div class="t" style="left:580px;top:708px;width:53px;text-align:right;padding-right:4px;font-family:'Liberation Sans',sans-serif;font-size:14px;font-weight:bold;font-style:italic;transform:scaleX(0.91);transform-origin:right center;">-97.501</div>
<div class="t" style="left:634px;top:708px;width:53px;text-align:right;padding-right:4px;font-family:'Liberation Sans',sans-serif;font-size:14px;font-weight:bold;font-style:italic;transform:scaleX(0.91);transform-origin:right center;">-97.501</div>
<div class="t" style="left:688px;top:708px;width:53px;text-align:right;padding-right:4px;font-family:'Liberation Sans',sans-serif;font-size:14px;font-weight:bold;font-style:italic;transform:scaleX(0.91);transform-origin:right center;">-97.501</div>
<div class="t" style="left:741px;top:708px;width:54px;text-align:right;padding-right:4px;font-family:'Liberation Sans',sans-serif;font-size:14px;font-weight:bold;font-style:italic;transform:scaleX(0.91);transform-origin:right center;">34.329</div>
<div class="t" style="left:795px;top:709px;width:59px;text-align:center;font-family:'Liberation Serif',serif;font-size:13px;font-weight:bold;transform:scaleX(1.15);transform-origin:center center;">0%</div>
<div class="t" style="left:855px;top:709px;width:47px;text-align:center;font-family:'Liberation Serif',serif;font-size:14px;font-weight:bold;">######</div>
<div class="t" style="left:952px;top:709px;width:44px;text-align:center;font-family:'Liberation Serif',serif;font-size:13px;font-weight:bold;color:#e00000;">Reject</div>
<div class="t" style="left:997px;top:709px;width:87px;text-align:center;font-family:'Liberation Serif',serif;font-size:13px;font-weight:bold;color:#e00000;">Reject</div>
<div class="t" style="left:2px;top:729px;width:60px;text-align:center;font-family:'Liberation Sans',sans-serif;font-size:13.33px;">33</div>
<div class="t" style="left:62px;top:729px;width:61px;text-align:left;padding-left:2px;font-family:'Liberation Sans',sans-serif;font-size:13.33px;">P2</div>
<div class="t" style="left:123px;top:729px;width:65px;text-align:left;padding-left:2px;font-family:'Liberation Sans',sans-serif;font-size:13.33px;">C3</div>
<div class="t" style="left:188px;top:728px;width:61px;text-align:right;padding-right:3px;font-family:'Liberation Serif',serif;font-size:15px;font-weight:bold;transform:scaleX(0.93);transform-origin:right center;">106.58</div>
<div class="t" style="left:249px;top:728px;width:48px;text-align:center;font-family:'Liberation Serif',serif;font-size:14.5px;">0.20</div>
<div class="t" style="left:297px;top:728px;width:47px;text-align:center;font-family:'Liberation Serif',serif;font-size:14.5px;">0.20</div>
<div class="t" style="left:346px;top:729px;width:69px;text-align:center;font-family:'Liberation Sans',sans-serif;font-size:13.33px;">OMM</div>
<div class="t" style="left:416px;top:728px;width:56px;text-align:right;padding-right:2px;font-family:'Liberation Sans',sans-serif;font-size:14px;font-weight:bold;transform:scaleX(0.9);transform-origin:right center;">31.73</div>
<div class="t" style="left:473px;top:728px;width:52px;text-align:right;padding-right:2px;font-family:'Liberation Sans',sans-serif;font-size:14px;font-weight:bold;transform:scaleX(0.9);transform-origin:right center;">31.73</div>
<div class="t" style="left:526px;top:728px;width:53px;text-align:right;padding-right:2px;font-family:'Liberation Sans',sans-serif;font-size:14px;font-weight:bold;transform:scaleX(0.9);transform-origin:right center;">31.73</div>
<div class="t" style="left:580px;top:728px;width:53px;text-align:right;padding-right:4px;font-family:'Liberation Sans',sans-serif;font-size:14px;font-weight:bold;font-style:italic;transform:scaleX(0.91);transform-origin:right center;">-74.851</div>
<div class="t" style="left:634px;top:728px;width:53px;text-align:right;padding-right:4px;font-family:'Liberation Sans',sans-serif;font-size:14px;font-weight:bold;font-style:italic;transform:scaleX(0.91);transform-origin:right center;">-74.851</div>
<div class="t" style="left:688px;top:728px;width:53px;text-align:right;padding-right:4px;font-family:'Liberation Sans',sans-serif;font-size:14px;font-weight:bold;font-style:italic;transform:scaleX(0.91);transform-origin:right center;">-74.851</div>
<div class="t" style="left:741px;top:728px;width:54px;text-align:right;padding-right:4px;font-family:'Liberation Sans',sans-serif;font-size:14px;font-weight:bold;font-style:italic;transform:scaleX(0.91);transform-origin:right center;">31.729</div>
<div class="t" style="left:795px;top:729px;width:59px;text-align:center;font-family:'Liberation Serif',serif;font-size:13px;font-weight:bold;transform:scaleX(1.15);transform-origin:center center;">0%</div>
<div class="t" style="left:855px;top:729px;width:47px;text-align:center;font-family:'Liberation Serif',serif;font-size:14px;font-weight:bold;">######</div>
<div class="t" style="left:952px;top:729px;width:44px;text-align:center;font-family:'Liberation Serif',serif;font-size:13px;font-weight:bold;color:#e00000;">Reject</div>
<div class="t" style="left:997px;top:729px;width:87px;text-align:center;font-family:'Liberation Serif',serif;font-size:13px;font-weight:bold;color:#e00000;">Reject</div>
<div class="t" style="left:2px;top:749px;width:60px;text-align:center;font-family:'Liberation Sans',sans-serif;font-size:13.33px;">34</div>
<div class="t" style="left:62px;top:749px;width:61px;text-align:left;padding-left:2px;font-family:'Liberation Sans',sans-serif;font-size:13.33px;">P2</div>
<div class="t" style="left:123px;top:749px;width:65px;text-align:left;padding-left:2px;font-family:'Liberation Sans',sans-serif;font-size:13.33px;">B3</div>
<div class="t" style="left:188px;top:748px;width:61px;text-align:right;padding-right:3px;font-family:'Liberation Serif',serif;font-size:15px;font-weight:bold;transform:scaleX(0.93);transform-origin:right center;">103.68</div>
<div class="t" style="left:249px;top:748px;width:48px;text-align:center;font-family:'Liberation Serif',serif;font-size:14.5px;">0.20</div>
<div class="t" style="left:297px;top:748px;width:47px;text-align:center;font-family:'Liberation Serif',serif;font-size:14.5px;">0.20</div>
<div class="t" style="left:346px;top:749px;width:69px;text-align:center;font-family:'Liberation Sans',sans-serif;font-size:13.33px;">OMM</div>
<div class="t" style="left:416px;top:748px;width:56px;text-align:right;padding-right:2px;font-family:'Liberation Sans',sans-serif;font-size:14px;font-weight:bold;transform:scaleX(0.9);transform-origin:right center;">29.13</div>
<div class="t" style="left:473px;top:748px;width:52px;text-align:right;padding-right:2px;font-family:'Liberation Sans',sans-serif;font-size:14px;font-weight:bold;transform:scaleX(0.9);transform-origin:right center;">29.13</div>
<div class="t" style="left:526px;top:748px;width:53px;text-align:right;padding-right:2px;font-family:'Liberation Sans',sans-serif;font-size:14px;font-weight:bold;transform:scaleX(0.9);transform-origin:right center;">29.13</div>
<div class="t" style="left:580px;top:748px;width:53px;text-align:right;padding-right:4px;font-family:'Liberation Sans',sans-serif;font-size:14px;font-weight:bold;font-style:italic;transform:scaleX(0.91);transform-origin:right center;">-74.550</div>
<div class="t" style="left:634px;top:748px;width:53px;text-align:right;padding-right:4px;font-family:'Liberation Sans',sans-serif;font-size:14px;font-weight:bold;font-style:italic;transform:scaleX(0.91);transform-origin:right center;">-74.550</div>
<div class="t" style="left:688px;top:748px;width:53px;text-align:right;padding-right:4px;font-family:'Liberation Sans',sans-serif;font-size:14px;font-weight:bold;font-style:italic;transform:scaleX(0.91);transform-origin:right center;">-74.550</div>
<div class="t" style="left:741px;top:748px;width:54px;text-align:right;padding-right:4px;font-family:'Liberation Sans',sans-serif;font-size:14px;font-weight:bold;font-style:italic;transform:scaleX(0.91);transform-origin:right center;">29.130</div>
<div class="t" style="left:795px;top:749px;width:59px;text-align:center;font-family:'Liberation Serif',serif;font-size:13px;font-weight:bold;transform:scaleX(1.15);transform-origin:center center;">0%</div>
<div class="t" style="left:855px;top:749px;width:47px;text-align:center;font-family:'Liberation Serif',serif;font-size:14px;font-weight:bold;">######</div>
<div class="t" style="left:952px;top:749px;width:44px;text-align:center;font-family:'Liberation Serif',serif;font-size:13px;font-weight:bold;color:#e00000;">Reject</div>
<div class="t" style="left:997px;top:749px;width:87px;text-align:center;font-family:'Liberation Serif',serif;font-size:13px;font-weight:bold;color:#e00000;">Reject</div>
<div class="btn" style="left:45px;top:128px"><svg width="7" height="5"><polygon points="0,0 7,0 3.5,4.5" fill="#5f5f5f"/></svg></div>
<div class="btn" style="left:106px;top:128px"><svg width="7" height="5"><polygon points="0,0 7,0 3.5,4.5" fill="#5f5f5f"/></svg></div>
<div class="btn" style="left:171px;top:128px"><svg width="7" height="5"><polygon points="0,0 7,0 3.5,4.5" fill="#5f5f5f"/></svg></div>
<div class="btn" style="left:232px;top:128px"><svg width="7" height="5"><polygon points="0,0 7,0 3.5,4.5" fill="#5f5f5f"/></svg></div>
<div class="btn" style="left:280px;top:128px"><svg width="7" height="5"><polygon points="0,0 7,0 3.5,4.5" fill="#5f5f5f"/></svg></div>
<div class="btn" style="left:328px;top:128px"><svg width="7" height="5"><polygon points="0,0 7,0 3.5,4.5" fill="#5f5f5f"/></svg></div>
<div class="btn" style="left:398px;top:128px"><svg width="7" height="5"><polygon points="0,0 7,0 3.5,4.5" fill="#5f5f5f"/></svg></div>
<div class="btn" style="left:455px;top:128px"><svg width="7" height="5"><polygon points="0,0 7,0 3.5,4.5" fill="#5f5f5f"/></svg></div>
<div class="btn" style="left:508px;top:128px"><svg width="7" height="5"><polygon points="0,0 7,0 3.5,4.5" fill="#5f5f5f"/></svg></div>
<div class="btn" style="left:562px;top:128px"><svg width="7" height="5"><polygon points="0,0 7,0 3.5,4.5" fill="#5f5f5f"/></svg></div>
<div class="btn" style="left:616px;top:128px"><svg width="7" height="5"><polygon points="0,0 7,0 3.5,4.5" fill="#5f5f5f"/></svg></div>
<div class="btn" style="left:670px;top:128px"><svg width="7" height="5"><polygon points="0,0 7,0 3.5,4.5" fill="#5f5f5f"/></svg></div>
<div class="btn" style="left:724px;top:128px"><svg width="7" height="5"><polygon points="0,0 7,0 3.5,4.5" fill="#5f5f5f"/></svg></div>
<div class="btn" style="left:778px;top:128px"><svg width="7" height="5"><polygon points="0,0 7,0 3.5,4.5" fill="#5f5f5f"/></svg></div>
<div class="btn" style="left:837px;top:128px"><svg width="7" height="5"><polygon points="0,0 7,0 3.5,4.5" fill="#5f5f5f"/></svg></div>
<div class="btn" style="left:885px;top:128px"><svg width="7" height="5"><polygon points="0,0 7,0 3.5,4.5" fill="#5f5f5f"/></svg></div>
<div class="btn" style="left:934px;top:128px"><svg width="7" height="5"><polygon points="0,0 7,0 3.5,4.5" fill="#5f5f5f"/></svg></div>
<div class="btn" style="left:979px;top:128px"><svg width="7" height="5"><polygon points="0,0 7,0 3.5,4.5" fill="#5f5f5f"/></svg></div>
<div class="btn" style="left:1068px;top:128px"><svg width="7" height="5"><polygon points="0,0 7,0 3.5,4.5" fill="#5f5f5f"/></svg></div>
<div class="btn" style="left:1224px;top:128px"><svg width="7" height="5"><polygon points="0,0 7,0 3.5,4.5" fill="#5f5f5f"/></svg></div>
<div class="btn" style="left:1358px;top:128px"><svg width="7" height="5"><polygon points="0,0 7,0 3.5,4.5" fill="#5f5f5f"/></svg></div>
<div style="left:410px;top:108px;width:0;height:0;border-top:5px solid #f00;border-left:5px solid transparent"></div></body></html>
